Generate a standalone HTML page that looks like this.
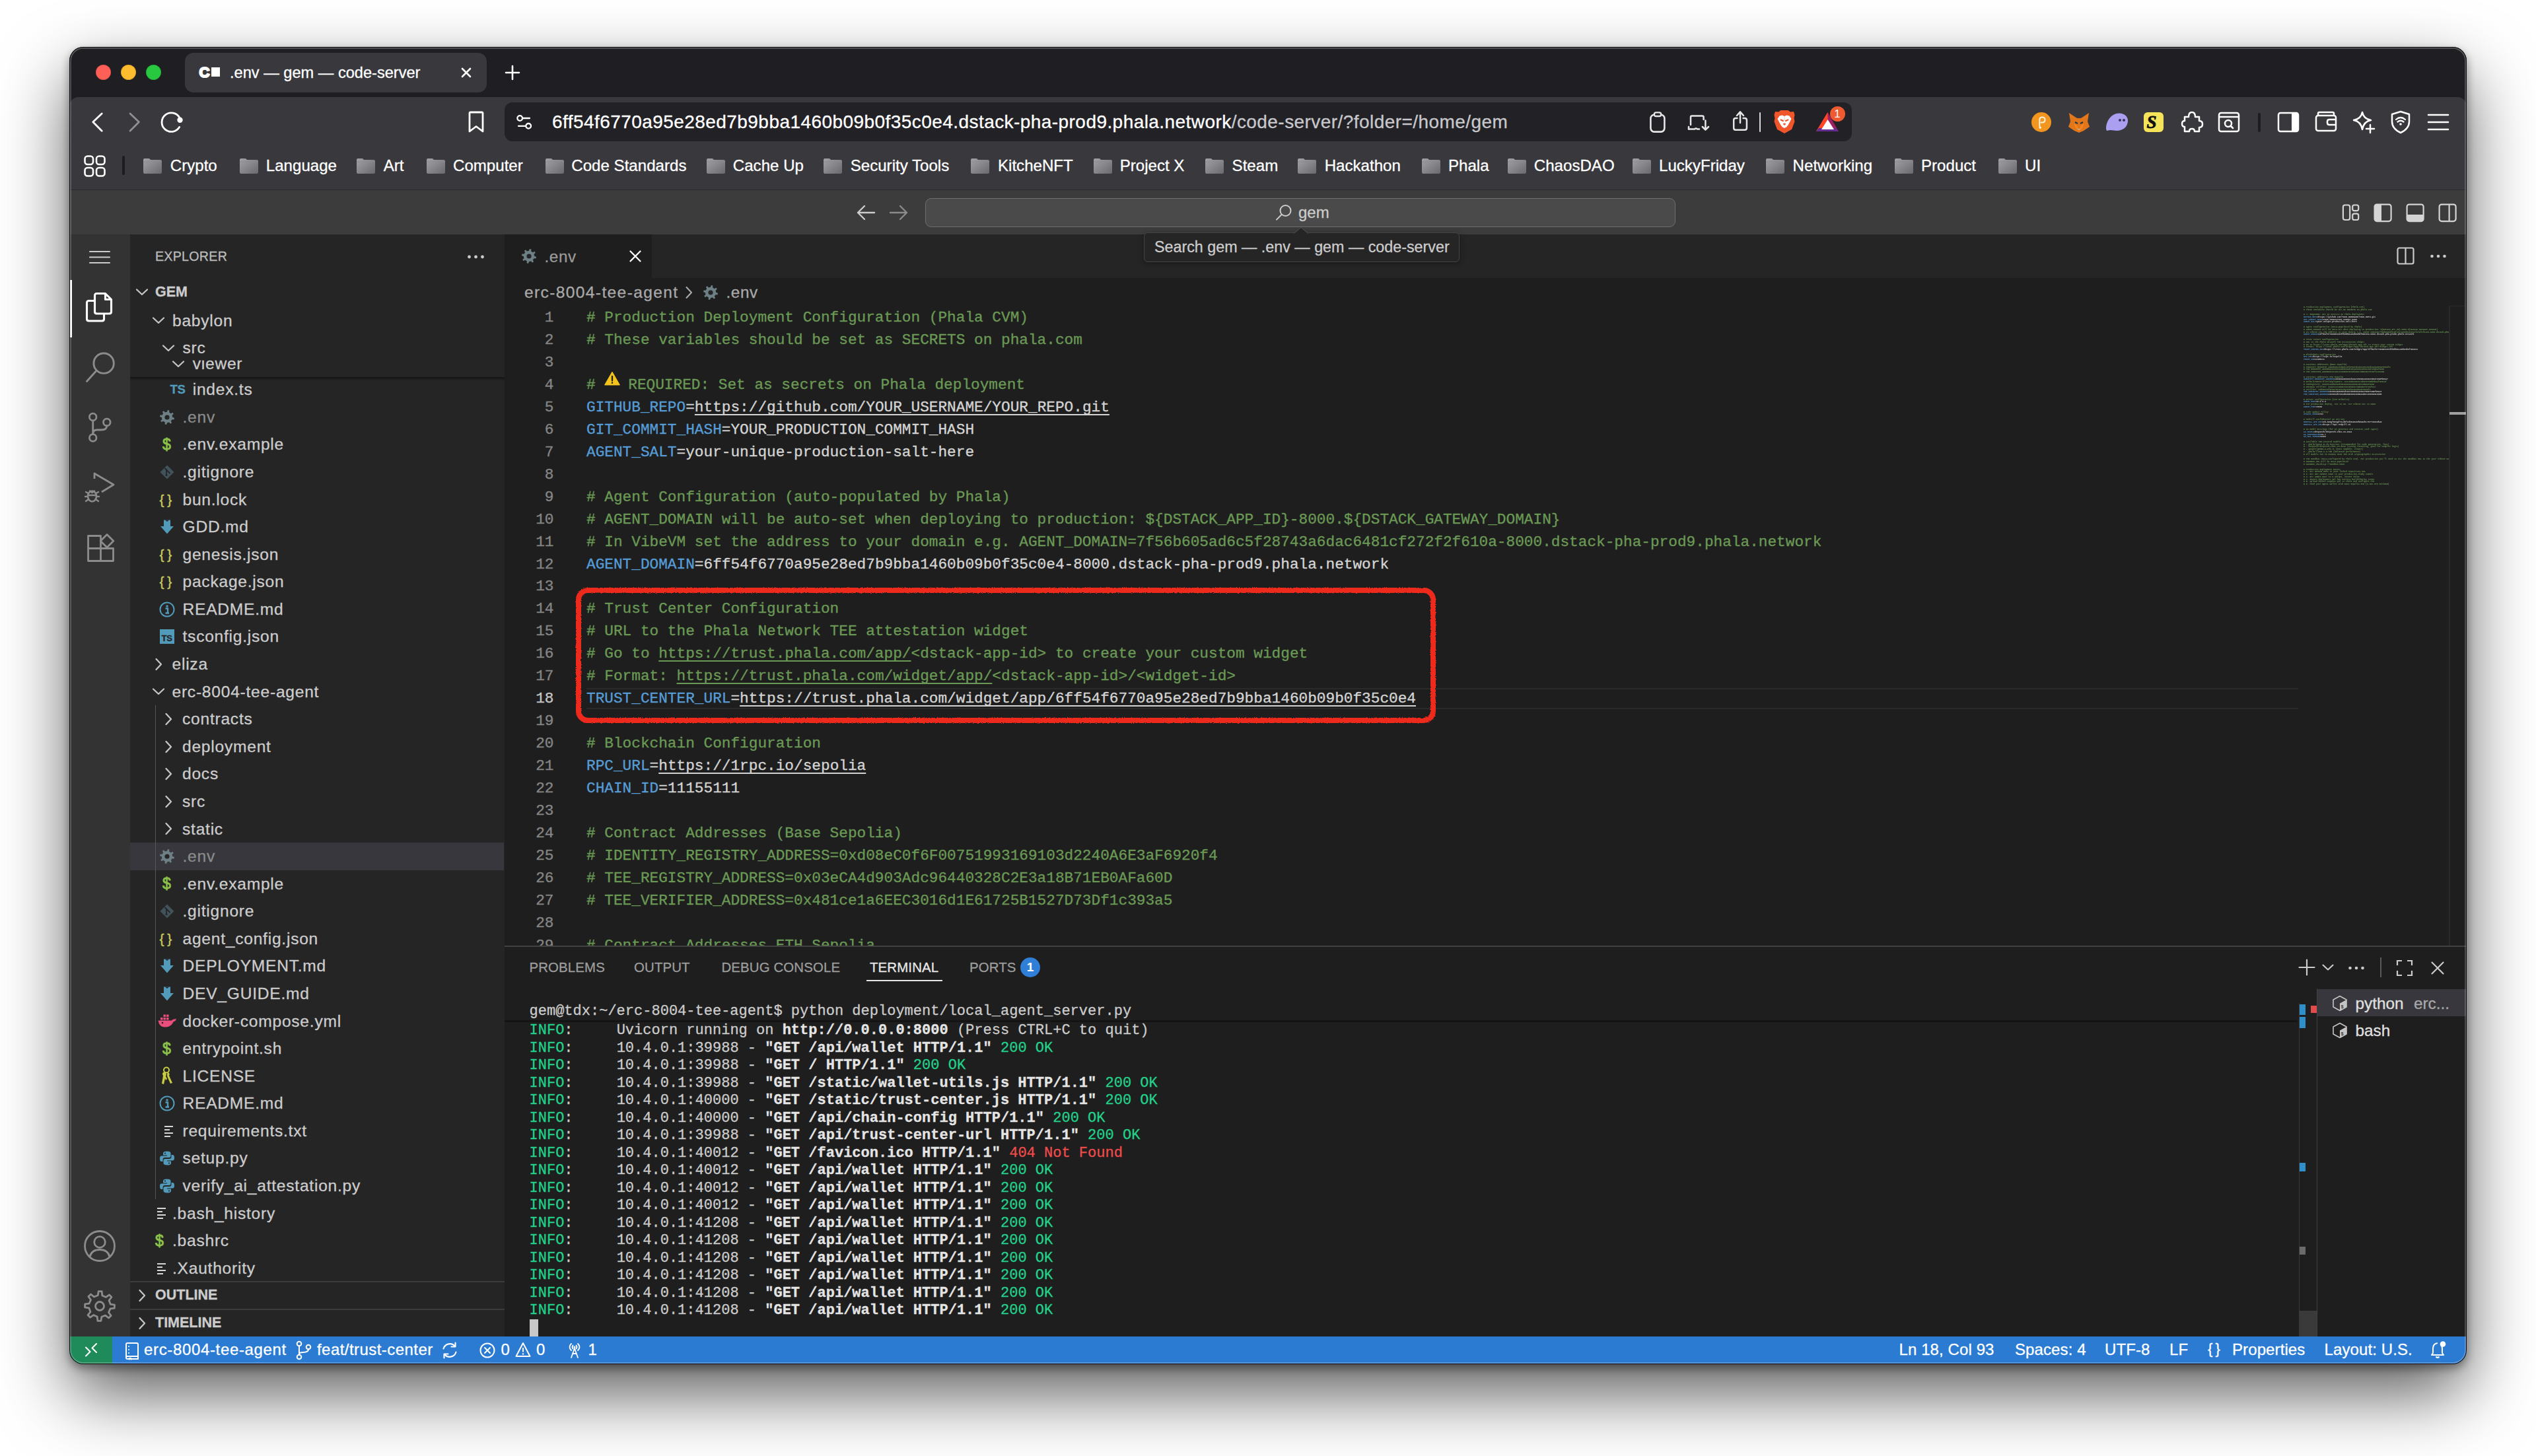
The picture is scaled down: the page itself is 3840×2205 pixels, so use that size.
<!DOCTYPE html>
<html><head><meta charset="utf-8">
<style>
*{box-sizing:border-box;margin:0;padding:0}
html,body{width:3840px;height:2205px;overflow:hidden;background:#ffffff}
body{font-family:"Liberation Sans",sans-serif;position:relative}
.a{position:absolute}
.win{position:absolute;left:105px;top:70.8px;width:3630px;height:1995.5px;border-radius:21px;overflow:hidden;background:#1f1f23;
 box-shadow:0 6px 14px rgba(0,0,0,0.4),0 45px 105px -2px rgba(0,0,0,0.66)}
.wb{position:absolute;left:0;top:0;width:3630px;height:1995.5px;border-radius:21px;box-shadow:inset 0 0 0 1.1px #0b0b0d,inset 0 0 0 2.8px rgba(255,255,255,0.26)}
.t{white-space:pre;position:absolute;-webkit-text-stroke:0.3px currentColor}
.t.m{-webkit-text-stroke:0}
svg{position:absolute;overflow:visible}
.m{font-family:"Liberation Mono",monospace}
</style></head>
<body>
<svg width="0" height="0" style="position:absolute"><filter id="rough"><feTurbulence type="fractalNoise" baseFrequency="1.3" numOctaves="2" seed="5"/><feDisplacementMap in="SourceGraphic" scale="3.2"/></filter></svg>
<div class="win">
<div class="a" style="left:0.00px;top:-0.80px;width:3630.00px;height:77.00px;background:#1f1f23;"></div>
<div class="a" style="left:0.00px;top:76.20px;width:3630.00px;height:141.00px;background:#38383d;border-radius:14px 14px 0 0"></div>
<div class="a" style="left:0.00px;top:216.20px;width:3630.00px;height:1.50px;background:#2b2b2f;"></div>
<div class="a" style="left:40.00px;top:27.70px;width:23px;height:23px;border-radius:50%;background:#fe5f57;box-shadow:inset 0 0 0 0.8px rgba(0,0,0,0.15)"></div>
<div class="a" style="left:77.90px;top:27.70px;width:23px;height:23px;border-radius:50%;background:#febc2e;box-shadow:inset 0 0 0 0.8px rgba(0,0,0,0.15)"></div>
<div class="a" style="left:115.70px;top:27.70px;width:23px;height:23px;border-radius:50%;background:#28c840;box-shadow:inset 0 0 0 0.8px rgba(0,0,0,0.15)"></div>
<div class="a" style="left:175.00px;top:9.20px;width:457.00px;height:60.00px;background:#38383d;border-radius:13px"></div>
<div class="t" style="left:196.50px;top:26.00px;font-size:22px;line-height:26.4px;color:#fff;font-family:'Liberation Sans',sans-serif;font-weight:bold;-webkit-text-stroke:2.2px #fff">C</div>
<div class="a" style="left:214.50px;top:31.70px;width:13.00px;height:14.00px;background:#fff;"></div>
<div class="t" style="left:243.00px;top:25.04px;font-size:23.6px;line-height:28.32px;color:#ffffff;font-family:'Liberation Sans',sans-serif;font-weight:normal;">.env — gem — code-server</div>
<svg style="left:593.00px;top:31.20px;" width="16" height="16" viewBox="0 0 16 16"><path d="M2 2L14 14M14 2L2 14" stroke="#fff" stroke-width="2.6" stroke-linecap="round"/></svg>
<svg style="left:660.00px;top:28.20px;" width="22" height="22" viewBox="0 0 22 22"><path d="M11 1V21M1 11H21" stroke="#fff" stroke-width="2.6" stroke-linecap="round"/></svg>
<svg style="left:33.00px;top:99.20px;" width="20" height="30" viewBox="0 0 20 30"><path d="M16.2 1.9L2.8 14.8L16.2 28.2" fill="none" stroke="#fff" stroke-width="2.8" stroke-linecap="round" stroke-linejoin="round"/></svg>
<svg style="left:89.00px;top:99.20px;" width="20" height="30" viewBox="0 0 20 30"><path d="M3 1.9L16.4 14.8L3 28.2" fill="none" stroke="#8e8e93" stroke-width="2.8" stroke-linecap="round" stroke-linejoin="round"/></svg>
<svg style="left:137.00px;top:95.20px;" width="36" height="36" viewBox="0 0 36 36"><path d="M30 12.5A14.3 14.3 0 1 0 29.6 26.5" fill="none" stroke="#fff" stroke-width="2.8" stroke-linecap="round"/><circle cx="30.5" cy="15.7" r="4.2" fill="#fff"/></svg>
<svg style="left:603.00px;top:97.20px;" width="26" height="34" viewBox="0 0 26 34"><path d="M3 3.5Q3 2 4.5 2H21.5Q23 2 23 3.5V31L13 23.5L3 31Z" fill="none" stroke="#fff" stroke-width="2.8" stroke-linejoin="round"/></svg>
<div class="a" style="left:659.00px;top:84.70px;width:2040.00px;height:59.00px;background:#222226;border-radius:12px"></div>
<svg style="left:675.00px;top:101.20px;" width="26" height="26" viewBox="0 0 26 26"><circle cx="7.2" cy="7" r="3.8" fill="none" stroke="#fff" stroke-width="2.3"/><path d="M11.5 7H22" stroke="#fff" stroke-width="2.3" stroke-linecap="round"/><circle cx="20.2" cy="18.8" r="3.8" fill="none" stroke="#fff" stroke-width="2.3"/><path d="M5 18.8H15.8" stroke="#fff" stroke-width="2.3" stroke-linecap="round"/></svg>
<div class="t" style="left:731.00px;top:97.40px;font-size:28px;line-height:33.6px;color:#ffffff;font-family:'Liberation Sans',sans-serif;font-weight:normal;letter-spacing:0.44px">6ff54f6770a95e28ed7b9bba1460b09b0f35c0e4.dstack-pha-prod9.phala.network<span style="color:#c7c7cc">/code-server/?folder=/home/gem</span></div>
<svg style="left:2391.00px;top:97.20px;" width="28" height="34" viewBox="0 0 28 34"><rect x="3.4" y="5.8" width="21" height="25.8" rx="5.5" fill="none" stroke="#e6e6e6" stroke-width="2.6"/><rect x="8.8" y="2.4" width="10.4" height="5.6" rx="2.8" fill="#222226" stroke="#e6e6e6" stroke-width="2.4"/></svg>
<svg style="left:2449.00px;top:101.20px;" width="36" height="28" viewBox="0 0 36 28"><path d="M6 17V5.5Q6 3.6 7.9 3.6H23.7Q25.6 3.6 25.6 5.5V9" fill="none" stroke="#e6e6e6" stroke-width="2.5" stroke-linecap="round"/><path d="M3 23.5H12Q14 21.5 16 23.5H19" fill="none" stroke="#e6e6e6" stroke-width="2.5" stroke-linecap="round"/><path d="M3 20V23.5" stroke="#e6e6e6" stroke-width="2.5" stroke-linecap="round"/><path d="M28.4 10.5V24.5M23.8 20L28.4 24.6L33 20" fill="none" stroke="#e6e6e6" stroke-width="2.5" stroke-linecap="round" stroke-linejoin="round"/></svg>
<svg style="left:2516.00px;top:95.20px;" width="28" height="34" viewBox="0 0 28 34"><path d="M14 20V4M9 9L14 3.4L19 9" fill="none" stroke="#e6e6e6" stroke-width="2.5" stroke-linecap="round" stroke-linejoin="round"/><path d="M9.5 13H7Q4.2 13 4.2 15.8V27.8Q4.2 30.8 7 30.8H21Q23.9 30.8 23.9 27.8V15.8Q23.9 13 21 13H18.5" fill="none" stroke="#e6e6e6" stroke-width="2.5" stroke-linecap="round"/></svg>
<div class="a" style="left:2559.00px;top:99.20px;width:2.40px;height:30.00px;background:#d8d8d8;border-radius:2px"></div>
<svg style="left:2581.00px;top:95.20px;" width="32" height="37" viewBox="0 0 32 37"><path d="M7 3.5L10.5 1H21.5L25 3.5L30 3L31.5 8L30.5 13L31.5 18L27 30L16 36L5 30L0.5 18L1.5 13L0.5 8L2 3Z" fill="#f1562b"/><path d="M8.5 9.5L12.5 8.5L16 10L19.5 8.5L23.5 9.5L26.5 14L24.5 18L21.5 23.5L19 26.5L16 28L13 26.5L10.5 23.5L7.5 18L5.5 14Z" fill="#ffffff"/><path d="M10.5 15.5L14 17M21.5 15.5L18 17" stroke="#f1562b" stroke-width="2" stroke-linecap="round"/><path d="M13.5 21.5L16 20.5L18.5 21.5L16 24Z" fill="#f1562b"/><path d="M16 10V17" stroke="#f7c6b5" stroke-width="1"/></svg>
<svg style="left:2643.00px;top:97.20px;" width="38" height="33" viewBox="0 0 38 33"><path d="M19.5 2L36 31H2Z" fill="#9e1f63"/><path d="M19.5 2L2 31H9L19.5 12.5Z" fill="#ff4724"/><path d="M2 31H36L32 26H6Z" fill="#662d91"/><path d="M19.5 13L29 28H10Z" fill="#ffffff"/></svg>
<div class="a" style="left:2665.50px;top:90.70px;width:23px;height:23px;border-radius:50%;background:#f05a31;color:#fff;font-size:17px;line-height:23px;text-align:center">1</div>
<svg style="left:2971.00px;top:99.20px;" width="30" height="30" viewBox="0 0 30 30"><circle cx="15" cy="15" r="15" fill="#f3961f"/><path d="M12.3 21V11.5Q12.3 7.5 16.3 7.5Q20.5 7.5 20.5 11.5Q20.5 15.5 16.3 15.5H14.5" fill="none" stroke="#fff3e0" stroke-width="2" stroke-linecap="round"/><circle cx="13.2" cy="23.2" r="1.7" fill="#fff3e0"/></svg>
<svg style="left:3026.00px;top:97.20px;" width="34" height="34" viewBox="0 0 34 34"><path d="M2 3L14 11H20L32 3L30 16L33 24L24 30L17 33L10 30L1 24L4 16Z" fill="#e2761b"/><path d="M9 19L14 22L17 29L20 22L25 19L22 26L17 30L12 26Z" fill="#f6851b"/><path d="M11 17L15 19M23 17L19 19" stroke="#233447" stroke-width="2"/><path d="M14 27L17 29L20 27" fill="#c0ad9e"/></svg>
<svg style="left:3083.00px;top:99.20px;" width="36" height="30" viewBox="0 0 36 30"><path d="M3 28C-1 28 1 10 12 4C23 -2 35 4 34 14C33 22 28 27 18 28C12 28 8 26 3 28Z" fill="#ab9ff2"/><circle cx="22" cy="12" r="2" fill="#3c315b"/><circle cx="28" cy="12" r="2" fill="#3c315b"/></svg>
<div class="a" style="left:3141.00px;top:99.20px;width:30.00px;height:30.00px;background:#f5e45a;border-radius:6px"></div>
<div class="t" style="left:3145.50px;top:98.50px;font-size:27px;line-height:32.4px;color:#111;font-family:'Liberation Serif',serif;font-weight:bold;font-style:italic;-webkit-text-stroke:0.8px #111">S</div>
<svg style="left:3197.00px;top:97.20px;" width="34" height="34" viewBox="0 0 34 34"><path d="M6 9H12Q12 2 17 2Q22 2 22 9H28V15Q33 15 33 20Q33 25 28 25V31H21Q21 27 17 27Q13 27 13 31H6V24Q2 24 2 19.5Q2 15 6 15Z" fill="none" stroke="#fff" stroke-width="2.5" stroke-linejoin="round"/></svg>
<svg style="left:3253.00px;top:98.20px;" width="34" height="32" viewBox="0 0 34 32"><rect x="2" y="2" width="30" height="28" rx="3" fill="none" stroke="#fff" stroke-width="2.5"/><path d="M2 8H32" stroke="#fff" stroke-width="2.5"/><circle cx="16" cy="18" r="5" fill="none" stroke="#fff" stroke-width="2.5"/><path d="M19.5 21.5L23 25" stroke="#fff" stroke-width="2.5" stroke-linecap="round"/></svg>
<div class="a" style="left:3313.50px;top:100.20px;width:4.00px;height:29.00px;background:#1d1d20;border-radius:2px"></div>
<svg style="left:3343.00px;top:98.20px;" width="34" height="32" viewBox="0 0 34 32"><rect x="2" y="2" width="30" height="28" rx="3" fill="none" stroke="#fff" stroke-width="2.5"/><rect x="22" y="2" width="10" height="28" fill="#fff"/></svg>
<svg style="left:3400.00px;top:97.20px;" width="34" height="32" viewBox="0 0 34 32"><path d="M5 7V4Q5 2 7 2H27Q29 2 29 4V7" fill="none" stroke="#fff" stroke-width="2.5"/><rect x="2" y="7" width="30" height="23" rx="3" fill="none" stroke="#fff" stroke-width="2.5"/><path d="M32 13H22Q19 13 19 16V18Q19 21 22 21H32" fill="none" stroke="#fff" stroke-width="2.5"/></svg>
<svg style="left:3456.00px;top:96.20px;" width="36" height="36" viewBox="0 0 36 36"><path d="M16 3Q18 13 29 15Q18 17 16 29Q14 17 3 15Q14 13 16 3Z" fill="none" stroke="#fff" stroke-width="2.5" stroke-linejoin="round"/><path d="M28 22V34M22 28H34" stroke="#fff" stroke-width="2.5" stroke-linecap="round"/></svg>
<svg style="left:3515.00px;top:96.20px;" width="30" height="36" viewBox="0 0 30 36"><path d="M15 2L28 6V17Q28 28 15 34Q2 28 2 17V6Z" fill="none" stroke="#fff" stroke-width="2.5" stroke-linejoin="round"/><path d="M8 14Q15 8 22 14M10.5 17.5Q15 14 19.5 17.5" fill="none" stroke="#fff" stroke-width="2.3" stroke-linecap="round"/><circle cx="15" cy="21" r="1.8" fill="#fff"/></svg>
<svg style="left:3570.00px;top:101.20px;" width="34" height="26" viewBox="0 0 34 26"><path d="M2 2H32M2 13H32M2 24H32" stroke="#fff" stroke-width="2.6" stroke-linecap="round"/></svg>
<svg style="left:22.00px;top:164.20px;" width="34" height="34" viewBox="0 0 34 34"><rect x="1.5" y="1.5" width="12.5" height="12.5" rx="4" fill="none" stroke="#fff" stroke-width="2.6"/><rect x="1.5" y="19" width="12.5" height="12.5" rx="4" fill="none" stroke="#fff" stroke-width="2.6"/><rect x="19" y="1.5" width="12.5" height="12.5" rx="4" fill="none" stroke="#fff" stroke-width="2.6"/><rect x="19" y="19" width="12.5" height="12.5" rx="4" fill="none" stroke="#fff" stroke-width="2.6"/></svg>
<div class="a" style="left:80.00px;top:165.20px;width:4.00px;height:29.00px;background:#1d1d20;border-radius:2px"></div>
<svg style="left:111.00px;top:168.20px;" width="30" height="25" viewBox="0 0 30 25"><defs><linearGradient id="fg" x1="0" y1="0" x2="1" y2="1"><stop offset="0" stop-color="#a2a2a7"/><stop offset="1" stop-color="#69696e"/></linearGradient></defs><path d="M1 3Q1 1 3 1H10L12 3H27Q29 3 29 5V22Q29 24 27 24H3Q1 24 1 22Z" fill="url(#fg)"/><path d="M1 6H29" stroke="#8b8b90" stroke-width="1"/></svg>
<div class="t" style="left:152.80px;top:165.74px;font-size:24.1px;line-height:28.92px;color:#ffffff;font-family:'Liberation Sans',sans-serif;font-weight:normal;">Crypto</div>
<svg style="left:257.00px;top:168.20px;" width="30" height="25" viewBox="0 0 30 25"><defs><linearGradient id="fg" x1="0" y1="0" x2="1" y2="1"><stop offset="0" stop-color="#a2a2a7"/><stop offset="1" stop-color="#69696e"/></linearGradient></defs><path d="M1 3Q1 1 3 1H10L12 3H27Q29 3 29 5V22Q29 24 27 24H3Q1 24 1 22Z" fill="url(#fg)"/><path d="M1 6H29" stroke="#8b8b90" stroke-width="1"/></svg>
<div class="t" style="left:297.80px;top:165.74px;font-size:24.1px;line-height:28.92px;color:#ffffff;font-family:'Liberation Sans',sans-serif;font-weight:normal;">Language</div>
<svg style="left:434.00px;top:168.20px;" width="30" height="25" viewBox="0 0 30 25"><defs><linearGradient id="fg" x1="0" y1="0" x2="1" y2="1"><stop offset="0" stop-color="#a2a2a7"/><stop offset="1" stop-color="#69696e"/></linearGradient></defs><path d="M1 3Q1 1 3 1H10L12 3H27Q29 3 29 5V22Q29 24 27 24H3Q1 24 1 22Z" fill="url(#fg)"/><path d="M1 6H29" stroke="#8b8b90" stroke-width="1"/></svg>
<div class="t" style="left:475.70px;top:165.74px;font-size:24.1px;line-height:28.92px;color:#ffffff;font-family:'Liberation Sans',sans-serif;font-weight:normal;">Art</div>
<svg style="left:540.00px;top:168.20px;" width="30" height="25" viewBox="0 0 30 25"><defs><linearGradient id="fg" x1="0" y1="0" x2="1" y2="1"><stop offset="0" stop-color="#a2a2a7"/><stop offset="1" stop-color="#69696e"/></linearGradient></defs><path d="M1 3Q1 1 3 1H10L12 3H27Q29 3 29 5V22Q29 24 27 24H3Q1 24 1 22Z" fill="url(#fg)"/><path d="M1 6H29" stroke="#8b8b90" stroke-width="1"/></svg>
<div class="t" style="left:581.00px;top:165.74px;font-size:24.1px;line-height:28.92px;color:#ffffff;font-family:'Liberation Sans',sans-serif;font-weight:normal;">Computer</div>
<svg style="left:720.00px;top:168.20px;" width="30" height="25" viewBox="0 0 30 25"><defs><linearGradient id="fg" x1="0" y1="0" x2="1" y2="1"><stop offset="0" stop-color="#a2a2a7"/><stop offset="1" stop-color="#69696e"/></linearGradient></defs><path d="M1 3Q1 1 3 1H10L12 3H27Q29 3 29 5V22Q29 24 27 24H3Q1 24 1 22Z" fill="url(#fg)"/><path d="M1 6H29" stroke="#8b8b90" stroke-width="1"/></svg>
<div class="t" style="left:760.30px;top:165.74px;font-size:24.1px;line-height:28.92px;color:#ffffff;font-family:'Liberation Sans',sans-serif;font-weight:normal;">Code Standards</div>
<svg style="left:963.90px;top:168.20px;" width="30" height="25" viewBox="0 0 30 25"><defs><linearGradient id="fg" x1="0" y1="0" x2="1" y2="1"><stop offset="0" stop-color="#a2a2a7"/><stop offset="1" stop-color="#69696e"/></linearGradient></defs><path d="M1 3Q1 1 3 1H10L12 3H27Q29 3 29 5V22Q29 24 27 24H3Q1 24 1 22Z" fill="url(#fg)"/><path d="M1 6H29" stroke="#8b8b90" stroke-width="1"/></svg>
<div class="t" style="left:1004.80px;top:165.74px;font-size:24.1px;line-height:28.92px;color:#ffffff;font-family:'Liberation Sans',sans-serif;font-weight:normal;">Cache Up</div>
<svg style="left:1141.00px;top:168.20px;" width="30" height="25" viewBox="0 0 30 25"><defs><linearGradient id="fg" x1="0" y1="0" x2="1" y2="1"><stop offset="0" stop-color="#a2a2a7"/><stop offset="1" stop-color="#69696e"/></linearGradient></defs><path d="M1 3Q1 1 3 1H10L12 3H27Q29 3 29 5V22Q29 24 27 24H3Q1 24 1 22Z" fill="url(#fg)"/><path d="M1 6H29" stroke="#8b8b90" stroke-width="1"/></svg>
<div class="t" style="left:1182.70px;top:165.74px;font-size:24.1px;line-height:28.92px;color:#ffffff;font-family:'Liberation Sans',sans-serif;font-weight:normal;">Security Tools</div>
<svg style="left:1364.00px;top:168.20px;" width="30" height="25" viewBox="0 0 30 25"><defs><linearGradient id="fg" x1="0" y1="0" x2="1" y2="1"><stop offset="0" stop-color="#a2a2a7"/><stop offset="1" stop-color="#69696e"/></linearGradient></defs><path d="M1 3Q1 1 3 1H10L12 3H27Q29 3 29 5V22Q29 24 27 24H3Q1 24 1 22Z" fill="url(#fg)"/><path d="M1 6H29" stroke="#8b8b90" stroke-width="1"/></svg>
<div class="t" style="left:1406.00px;top:165.74px;font-size:24.1px;line-height:28.92px;color:#ffffff;font-family:'Liberation Sans',sans-serif;font-weight:normal;">KitcheNFT</div>
<svg style="left:1549.80px;top:168.20px;" width="30" height="25" viewBox="0 0 30 25"><defs><linearGradient id="fg" x1="0" y1="0" x2="1" y2="1"><stop offset="0" stop-color="#a2a2a7"/><stop offset="1" stop-color="#69696e"/></linearGradient></defs><path d="M1 3Q1 1 3 1H10L12 3H27Q29 3 29 5V22Q29 24 27 24H3Q1 24 1 22Z" fill="url(#fg)"/><path d="M1 6H29" stroke="#8b8b90" stroke-width="1"/></svg>
<div class="t" style="left:1590.70px;top:165.74px;font-size:24.1px;line-height:28.92px;color:#ffffff;font-family:'Liberation Sans',sans-serif;font-weight:normal;">Project X</div>
<svg style="left:1719.40px;top:168.20px;" width="30" height="25" viewBox="0 0 30 25"><defs><linearGradient id="fg" x1="0" y1="0" x2="1" y2="1"><stop offset="0" stop-color="#a2a2a7"/><stop offset="1" stop-color="#69696e"/></linearGradient></defs><path d="M1 3Q1 1 3 1H10L12 3H27Q29 3 29 5V22Q29 24 27 24H3Q1 24 1 22Z" fill="url(#fg)"/><path d="M1 6H29" stroke="#8b8b90" stroke-width="1"/></svg>
<div class="t" style="left:1760.60px;top:165.74px;font-size:24.1px;line-height:28.92px;color:#ffffff;font-family:'Liberation Sans',sans-serif;font-weight:normal;">Steam</div>
<svg style="left:1859.00px;top:168.20px;" width="30" height="25" viewBox="0 0 30 25"><defs><linearGradient id="fg" x1="0" y1="0" x2="1" y2="1"><stop offset="0" stop-color="#a2a2a7"/><stop offset="1" stop-color="#69696e"/></linearGradient></defs><path d="M1 3Q1 1 3 1H10L12 3H27Q29 3 29 5V22Q29 24 27 24H3Q1 24 1 22Z" fill="url(#fg)"/><path d="M1 6H29" stroke="#8b8b90" stroke-width="1"/></svg>
<div class="t" style="left:1900.70px;top:165.74px;font-size:24.1px;line-height:28.92px;color:#ffffff;font-family:'Liberation Sans',sans-serif;font-weight:normal;">Hackathon</div>
<svg style="left:2046.80px;top:168.20px;" width="30" height="25" viewBox="0 0 30 25"><defs><linearGradient id="fg" x1="0" y1="0" x2="1" y2="1"><stop offset="0" stop-color="#a2a2a7"/><stop offset="1" stop-color="#69696e"/></linearGradient></defs><path d="M1 3Q1 1 3 1H10L12 3H27Q29 3 29 5V22Q29 24 27 24H3Q1 24 1 22Z" fill="url(#fg)"/><path d="M1 6H29" stroke="#8b8b90" stroke-width="1"/></svg>
<div class="t" style="left:2088.00px;top:165.74px;font-size:24.1px;line-height:28.92px;color:#ffffff;font-family:'Liberation Sans',sans-serif;font-weight:normal;">Phala</div>
<svg style="left:2177.00px;top:168.20px;" width="30" height="25" viewBox="0 0 30 25"><defs><linearGradient id="fg" x1="0" y1="0" x2="1" y2="1"><stop offset="0" stop-color="#a2a2a7"/><stop offset="1" stop-color="#69696e"/></linearGradient></defs><path d="M1 3Q1 1 3 1H10L12 3H27Q29 3 29 5V22Q29 24 27 24H3Q1 24 1 22Z" fill="url(#fg)"/><path d="M1 6H29" stroke="#8b8b90" stroke-width="1"/></svg>
<div class="t" style="left:2217.80px;top:165.74px;font-size:24.1px;line-height:28.92px;color:#ffffff;font-family:'Liberation Sans',sans-serif;font-weight:normal;">ChaosDAO</div>
<svg style="left:2366.00px;top:168.20px;" width="30" height="25" viewBox="0 0 30 25"><defs><linearGradient id="fg" x1="0" y1="0" x2="1" y2="1"><stop offset="0" stop-color="#a2a2a7"/><stop offset="1" stop-color="#69696e"/></linearGradient></defs><path d="M1 3Q1 1 3 1H10L12 3H27Q29 3 29 5V22Q29 24 27 24H3Q1 24 1 22Z" fill="url(#fg)"/><path d="M1 6H29" stroke="#8b8b90" stroke-width="1"/></svg>
<div class="t" style="left:2407.00px;top:165.74px;font-size:24.1px;line-height:28.92px;color:#ffffff;font-family:'Liberation Sans',sans-serif;font-weight:normal;">LuckyFriday</div>
<svg style="left:2568.00px;top:168.20px;" width="30" height="25" viewBox="0 0 30 25"><defs><linearGradient id="fg" x1="0" y1="0" x2="1" y2="1"><stop offset="0" stop-color="#a2a2a7"/><stop offset="1" stop-color="#69696e"/></linearGradient></defs><path d="M1 3Q1 1 3 1H10L12 3H27Q29 3 29 5V22Q29 24 27 24H3Q1 24 1 22Z" fill="url(#fg)"/><path d="M1 6H29" stroke="#8b8b90" stroke-width="1"/></svg>
<div class="t" style="left:2609.60px;top:165.74px;font-size:24.1px;line-height:28.92px;color:#ffffff;font-family:'Liberation Sans',sans-serif;font-weight:normal;">Networking</div>
<svg style="left:2763.00px;top:168.20px;" width="30" height="25" viewBox="0 0 30 25"><defs><linearGradient id="fg" x1="0" y1="0" x2="1" y2="1"><stop offset="0" stop-color="#a2a2a7"/><stop offset="1" stop-color="#69696e"/></linearGradient></defs><path d="M1 3Q1 1 3 1H10L12 3H27Q29 3 29 5V22Q29 24 27 24H3Q1 24 1 22Z" fill="url(#fg)"/><path d="M1 6H29" stroke="#8b8b90" stroke-width="1"/></svg>
<div class="t" style="left:2804.00px;top:165.74px;font-size:24.1px;line-height:28.92px;color:#ffffff;font-family:'Liberation Sans',sans-serif;font-weight:normal;">Product</div>
<svg style="left:2919.50px;top:168.20px;" width="30" height="25" viewBox="0 0 30 25"><defs><linearGradient id="fg" x1="0" y1="0" x2="1" y2="1"><stop offset="0" stop-color="#a2a2a7"/><stop offset="1" stop-color="#69696e"/></linearGradient></defs><path d="M1 3Q1 1 3 1H10L12 3H27Q29 3 29 5V22Q29 24 27 24H3Q1 24 1 22Z" fill="url(#fg)"/><path d="M1 6H29" stroke="#8b8b90" stroke-width="1"/></svg>
<div class="t" style="left:2961.00px;top:165.74px;font-size:24.1px;line-height:28.92px;color:#ffffff;font-family:'Liberation Sans',sans-serif;font-weight:normal;">UI</div>
<div class="a" style="left:0.00px;top:217.20px;width:3630.00px;height:67.00px;background:#3c3c3c;"></div>
<svg style="left:1191.00px;top:239.20px;" width="30" height="24" viewBox="0 0 30 24"><path d="M28 12H3M13 2L3 12L13 22" fill="none" stroke="#cccccc" stroke-width="2.4" stroke-linecap="round" stroke-linejoin="round"/></svg>
<svg style="left:1241.00px;top:239.20px;" width="30" height="24" viewBox="0 0 30 24"><path d="M2 12H27M17 2L27 12L17 22" fill="none" stroke="#8b8b8b" stroke-width="2.4" stroke-linecap="round" stroke-linejoin="round"/></svg>
<div class="a" style="left:1296.00px;top:229.20px;width:1136.00px;height:44.00px;background:#4a4a4a;border:1.6px solid #6e6e6e;border-radius:9px"></div>
<svg style="left:1826.00px;top:238.20px;" width="26" height="26" viewBox="0 0 26 26"><circle cx="15.5" cy="10" r="8" fill="none" stroke="#cccccc" stroke-width="2"/><path d="M9.8 15.8L2 23.6" stroke="#cccccc" stroke-width="2" stroke-linecap="round"/></svg>
<div class="t" style="left:1861.00px;top:236.80px;font-size:24px;line-height:28.8px;color:#cccccc;font-family:'Liberation Sans',sans-serif;font-weight:normal;">gem</div>
<svg style="left:3440.00px;top:237.20px;" width="30" height="28" viewBox="0 0 30 28"><rect x="2.9" y="2.5" width="10.3" height="22.5" rx="3" fill="none" stroke="#d4d4d4" stroke-width="2.2"/><rect x="17.2" y="2.5" width="9" height="8.6" rx="2.6" fill="none" stroke="#d4d4d4" stroke-width="2.2"/><rect x="17.2" y="15.6" width="9" height="9.4" rx="2.6" fill="none" stroke="#d4d4d4" stroke-width="2.2"/></svg>
<svg style="left:3488.00px;top:236.20px;" width="30" height="30" viewBox="0 0 30 30"><rect x="2.6" y="2.6" width="25" height="25.5" rx="3.5" fill="none" stroke="#d4d4d4" stroke-width="2.2"/><path d="M2.6 6Q2.6 2.6 6 2.6H13V28.1H6Q2.6 28.1 2.6 24.7Z" fill="#d4d4d4"/></svg>
<svg style="left:3537.00px;top:236.20px;" width="30" height="30" viewBox="0 0 30 30"><rect x="2.6" y="2.6" width="25" height="25.5" rx="3.5" fill="none" stroke="#d4d4d4" stroke-width="2.2"/><path d="M2.6 18H27.6V24.7Q27.6 28.1 24.2 28.1H6Q2.6 28.1 2.6 24.7Z" fill="#d4d4d4"/></svg>
<svg style="left:3586.00px;top:236.20px;" width="30" height="30" viewBox="0 0 30 30"><rect x="2.6" y="2.6" width="25" height="25.5" rx="3.5" fill="none" stroke="#d4d4d4" stroke-width="2.2"/><path d="M17.6 2.6V28.1" stroke="#d4d4d4" stroke-width="2.2"/></svg>
<div class="a" style="left:0.00px;top:284.20px;width:92.00px;height:1669.00px;background:#333333;"></div>
<svg style="left:29.00px;top:307.20px;" width="34" height="24" viewBox="0 0 34 24"><path d="M2 3H32M2 11.5H32M2 20H32" stroke="#cccccc" stroke-width="2.1" stroke-linecap="round"/></svg>
<div class="a" style="left:0.00px;top:353.70px;width:4.00px;height:87.00px;background:#ffffff;"></div>
<svg style="left:25.00px;top:372.70px;" width="44" height="46" viewBox="0 0 44 46"><path d="M13 12.5H4.5Q1.5 12.5 1.5 15.5V40Q1.5 43 4.5 43H24.5Q27.5 43 27.5 40V32" fill="none" stroke="#fff" stroke-width="3.1" stroke-linejoin="round"/><path d="M13.5 4.5Q13.5 1.5 16.5 1.5H29.5L38.5 10.5V29Q38.5 32 35.5 32H16.5Q13.5 32 13.5 29Z" fill="none" stroke="#fff" stroke-width="3.1" stroke-linejoin="round"/><path d="M29.5 1.5V10.5H38.5" fill="none" stroke="#fff" stroke-width="3.1" stroke-linejoin="round"/></svg>
<svg style="left:21.00px;top:459.20px;" width="50" height="52" viewBox="0 0 50 52"><circle cx="31.1" cy="20.2" r="15.2" fill="none" stroke="#8c8c8c" stroke-width="2.9"/><path d="M20.3 31L5.5 47.5" stroke="#8c8c8c" stroke-width="2.9" stroke-linecap="round"/></svg>
<svg style="left:21.00px;top:549.20px;" width="50" height="56" viewBox="0 0 50 56"><circle cx="14.7" cy="11.5" r="5.3" fill="none" stroke="#8c8c8c" stroke-width="2.8"/><circle cx="14.7" cy="43" r="5.3" fill="none" stroke="#8c8c8c" stroke-width="2.8"/><circle cx="35.8" cy="19.4" r="5.3" fill="none" stroke="#8c8c8c" stroke-width="2.8"/><path d="M14.7 16.8V37.7M35.8 24.7Q35.8 31 27 31H21Q14.7 31 14.7 37" fill="none" stroke="#8c8c8c" stroke-width="2.8"/></svg>
<svg style="left:19.00px;top:641.20px;" width="54" height="54" viewBox="0 0 54 54"><path d="M19 13V5L48 22L30 33" fill="none" stroke="#8c8c8c" stroke-width="2.8" stroke-linejoin="round"/><ellipse cx="15.5" cy="39.5" rx="6.5" ry="8" fill="none" stroke="#8c8c8c" stroke-width="2.6"/><path d="M9 38H22M6 33L9.5 35M25 33L21.5 35M5 40H9M22 40H26M6 47L9.5 44.5M25 47L21.5 44.5M12 31.5L15.5 34L19 31.5" fill="none" stroke="#8c8c8c" stroke-width="2.4" stroke-linecap="round"/></svg>
<svg style="left:23.00px;top:735.20px;" width="48" height="48" viewBox="0 0 48 48"><path d="M5.5 24.5H24.5V43.5H5.5ZM24.5 24.5H43.5V43.5H24.5ZM5.5 5.5H24.5V24.5H5.5Z" fill="none" stroke="#8c8c8c" stroke-width="2.8" stroke-linejoin="round"/><path d="M34 3.5L43.8 13.3L34 23.1L24.2 13.3Z" fill="none" stroke="#8c8c8c" stroke-width="2.8" stroke-linejoin="round"/></svg>
<svg style="left:21.00px;top:1791.20px;" width="50" height="50" viewBox="0 0 50 50"><circle cx="25" cy="25" r="22.5" fill="none" stroke="#8c8c8c" stroke-width="2.8"/><circle cx="25" cy="19" r="8.3" fill="none" stroke="#8c8c8c" stroke-width="2.8"/><path d="M10 41Q13 30.5 25 30.5Q37 30.5 40 41" fill="none" stroke="#8c8c8c" stroke-width="2.8"/></svg>
<svg style="left:21.00px;top:1882.20px;" width="50" height="50" viewBox="0 0 50 50"><path d="M25.00 8.50L27.12 2.60L31.95 3.60L31.55 9.86L36.67 13.33L42.34 10.66L45.05 14.79L40.34 18.93L41.50 25.00L47.40 27.12L46.40 31.95L40.14 31.55L36.67 36.67L39.34 42.34L35.21 45.05L31.07 40.34L25.00 41.50L22.88 47.40L18.05 46.40L18.45 40.14L13.33 36.67L7.66 39.34L4.95 35.21L9.66 31.07L8.50 25.00L2.60 22.88L3.60 18.05L9.86 18.45L13.33 13.33L10.66 7.66L14.79 4.95L18.93 9.66Z" fill="none" stroke="#8c8c8c" stroke-width="2.8" stroke-linejoin="round" transform="rotate(-10 25 25)"/><circle cx="25" cy="25" r="6.5" fill="none" stroke="#8c8c8c" stroke-width="2.8"/></svg>
<div class="a" style="left:92.00px;top:284.20px;width:567.00px;height:1669.00px;background:#252526;"></div>
<div class="t" style="left:130.00px;top:306.44px;font-size:19.6px;line-height:23.52px;color:#bbbbbb;font-family:'Liberation Sans',sans-serif;font-weight:normal;letter-spacing:0.3px">EXPLORER</div>
<svg style="left:602.00px;top:314.20px;" width="27" height="8" viewBox="0 0 27 8"><circle cx="3.5" cy="4" r="2.4" fill="#cccccc"/><circle cx="13.5" cy="4" r="2.4" fill="#cccccc"/><circle cx="23.5" cy="4" r="2.4" fill="#cccccc"/></svg>
<svg style="left:100.00px;top:365.70px;" width="20" height="12" viewBox="0 0 20 12"><path d="M2 2.5L10 10L18 2.5" fill="none" stroke="#c5c5c5" stroke-width="2.3" stroke-linecap="round" stroke-linejoin="round"/></svg>
<div class="t" style="left:130.00px;top:358.80px;font-size:21.5px;line-height:25.8px;color:#cccccc;font-family:'Liberation Sans',sans-serif;font-weight:bold;">GEM</div>
<div class="a" style="left:92.00px;top:1205.26px;width:566.00px;height:41.60px;background:#37373d;"></div>
<div class="a" style="left:129.50px;top:997.20px;width:1.60px;height:748.00px;background:#585858;"></div>
<div class="t" style="left:152.50px;top:508.10px;font-size:18.5px;line-height:22.2px;color:#519aba;font-family:'Liberation Sans',sans-serif;font-weight:bold;letter-spacing:-0.3px">TS</div>
<div class="t" style="left:186.70px;top:504.44px;font-size:24.6px;line-height:29.52px;color:#cccccc;font-family:'Liberation Sans',sans-serif;font-weight:normal;letter-spacing:0.75px">index.ts</div>
<svg style="left:135.50px;top:548.78px;" width="24" height="24" viewBox="0 0 24 24"><path d="M20.20 12.00L22.97 12.86L22.46 15.40L19.58 15.14L17.80 17.80L19.14 20.36L16.99 21.80L15.14 19.58L12.00 20.20L11.14 22.97L8.60 22.46L8.86 19.58L6.20 17.80L3.64 19.14L2.20 16.99L4.42 15.14L3.80 12.00L1.03 11.14L1.54 8.60L4.42 8.86L6.20 6.20L4.86 3.64L7.01 2.20L8.86 4.42L12.00 3.80L12.86 1.03L15.40 1.54L15.14 4.42L17.80 6.20L20.36 4.86L21.80 7.01L19.58 8.86Z" fill="#6d8086" fill-rule="evenodd"/><circle cx="12" cy="12" r="3.6" fill="#252526"/></svg>
<div class="t" style="left:171.50px;top:546.02px;font-size:24.6px;line-height:29.52px;color:#8b8b8b;font-family:'Liberation Sans',sans-serif;font-weight:normal;letter-spacing:0.75px">.env</div>
<div class="t" style="left:141.00px;top:589.06px;font-size:23px;line-height:27.6px;color:#8dc149;font-family:'Liberation Sans',sans-serif;font-weight:normal;-webkit-text-stroke:0.9px #8dc149">$</div>
<div class="t" style="left:171.50px;top:587.60px;font-size:24.6px;line-height:29.52px;color:#cccccc;font-family:'Liberation Sans',sans-serif;font-weight:normal;letter-spacing:0.75px">.env.example</div>
<svg style="left:135.50px;top:631.94px;" width="24" height="24" viewBox="0 0 24 24"><path d="M12 1.5L22.5 12L12 22.5L1.5 12Z" fill="#41535b"/><path d="M9 6.5L16 13.5M11 9V16" stroke="#252526" stroke-width="1.8" stroke-linecap="round"/><circle cx="11" cy="16.5" r="1.6" fill="#252526"/></svg>
<div class="t" style="left:171.50px;top:629.18px;font-size:24.6px;line-height:29.52px;color:#cccccc;font-family:'Liberation Sans',sans-serif;font-weight:normal;letter-spacing:0.75px">.gitignore</div>
<div class="t" style="left:136.50px;top:672.92px;font-size:21px;line-height:25.2px;color:#cbcb5e;font-family:'Liberation Sans',sans-serif;font-weight:normal;letter-spacing:-0.6px;-webkit-text-stroke:0.4px #cbcb5e">{ }</div>
<div class="t" style="left:171.50px;top:670.76px;font-size:24.6px;line-height:29.52px;color:#cccccc;font-family:'Liberation Sans',sans-serif;font-weight:normal;letter-spacing:0.75px">bun.lock</div>
<svg style="left:136.50px;top:715.10px;" width="22" height="24" viewBox="0 0 22 24"><path d="M6 1.5H16V11H21L11 22.5L1 11H6Z" fill="#519aba"/><path d="M8 1.5L11 4L14 1.5" fill="#252526"/></svg>
<div class="t" style="left:171.50px;top:712.34px;font-size:24.6px;line-height:29.52px;color:#cccccc;font-family:'Liberation Sans',sans-serif;font-weight:normal;letter-spacing:0.75px">GDD.md</div>
<div class="t" style="left:136.50px;top:756.08px;font-size:21px;line-height:25.2px;color:#cbcb5e;font-family:'Liberation Sans',sans-serif;font-weight:normal;letter-spacing:-0.6px;-webkit-text-stroke:0.4px #cbcb5e">{ }</div>
<div class="t" style="left:171.50px;top:753.92px;font-size:24.6px;line-height:29.52px;color:#cccccc;font-family:'Liberation Sans',sans-serif;font-weight:normal;letter-spacing:0.75px">genesis.json</div>
<div class="t" style="left:136.50px;top:797.66px;font-size:21px;line-height:25.2px;color:#cbcb5e;font-family:'Liberation Sans',sans-serif;font-weight:normal;letter-spacing:-0.6px;-webkit-text-stroke:0.4px #cbcb5e">{ }</div>
<div class="t" style="left:171.50px;top:795.50px;font-size:24.6px;line-height:29.52px;color:#cccccc;font-family:'Liberation Sans',sans-serif;font-weight:normal;letter-spacing:0.75px">package.json</div>
<svg style="left:135.50px;top:839.84px;" width="24" height="24" viewBox="0 0 24 24"><circle cx="12" cy="12" r="10.5" fill="none" stroke="#519aba" stroke-width="2"/><circle cx="12" cy="7" r="1.8" fill="#519aba"/><path d="M9.5 10.5H13V17.5M9.5 17.5H15" fill="none" stroke="#519aba" stroke-width="2.4"/></svg>
<div class="t" style="left:171.50px;top:837.08px;font-size:24.6px;line-height:29.52px;color:#cccccc;font-family:'Liberation Sans',sans-serif;font-weight:normal;letter-spacing:0.75px">README.md</div>
<div class="a" style="left:136.50px;top:882.42px;width:22.00px;height:22.00px;background:#519aba;"></div>
<div class="t" style="left:139.50px;top:888.62px;font-size:13px;line-height:15.6px;color:#252526;font-family:'Liberation Sans',sans-serif;font-weight:bold;letter-spacing:-0.3px">TS</div>
<div class="t" style="left:171.50px;top:878.66px;font-size:24.6px;line-height:29.52px;color:#cccccc;font-family:'Liberation Sans',sans-serif;font-weight:normal;letter-spacing:0.75px">tsconfig.json</div>
<svg style="left:129.00px;top:925.00px;" width="12" height="20" viewBox="0 0 12 20"><path d="M2.5 2L10 10L2.5 18" fill="none" stroke="#c5c5c5" stroke-width="2.3" stroke-linecap="round" stroke-linejoin="round"/></svg>
<div class="t" style="left:155.50px;top:920.24px;font-size:24.6px;line-height:29.52px;color:#cccccc;font-family:'Liberation Sans',sans-serif;font-weight:normal;letter-spacing:0.75px">eliza</div>
<svg style="left:125.00px;top:970.58px;" width="20" height="12" viewBox="0 0 20 12"><path d="M2 2.5L10 10L18 2.5" fill="none" stroke="#c5c5c5" stroke-width="2.3" stroke-linecap="round" stroke-linejoin="round"/></svg>
<div class="t" style="left:155.50px;top:961.82px;font-size:24.6px;line-height:29.52px;color:#cccccc;font-family:'Liberation Sans',sans-serif;font-weight:normal;letter-spacing:0.75px">erc-8004-tee-agent</div>
<svg style="left:144.00px;top:1008.16px;" width="12" height="20" viewBox="0 0 12 20"><path d="M2.5 2L10 10L2.5 18" fill="none" stroke="#c5c5c5" stroke-width="2.3" stroke-linecap="round" stroke-linejoin="round"/></svg>
<div class="t" style="left:171.00px;top:1003.40px;font-size:24.6px;line-height:29.52px;color:#cccccc;font-family:'Liberation Sans',sans-serif;font-weight:normal;letter-spacing:0.75px">contracts</div>
<svg style="left:144.00px;top:1049.74px;" width="12" height="20" viewBox="0 0 12 20"><path d="M2.5 2L10 10L2.5 18" fill="none" stroke="#c5c5c5" stroke-width="2.3" stroke-linecap="round" stroke-linejoin="round"/></svg>
<div class="t" style="left:171.00px;top:1044.98px;font-size:24.6px;line-height:29.52px;color:#cccccc;font-family:'Liberation Sans',sans-serif;font-weight:normal;letter-spacing:0.75px">deployment</div>
<svg style="left:144.00px;top:1091.32px;" width="12" height="20" viewBox="0 0 12 20"><path d="M2.5 2L10 10L2.5 18" fill="none" stroke="#c5c5c5" stroke-width="2.3" stroke-linecap="round" stroke-linejoin="round"/></svg>
<div class="t" style="left:171.00px;top:1086.56px;font-size:24.6px;line-height:29.52px;color:#cccccc;font-family:'Liberation Sans',sans-serif;font-weight:normal;letter-spacing:0.75px">docs</div>
<svg style="left:144.00px;top:1132.90px;" width="12" height="20" viewBox="0 0 12 20"><path d="M2.5 2L10 10L2.5 18" fill="none" stroke="#c5c5c5" stroke-width="2.3" stroke-linecap="round" stroke-linejoin="round"/></svg>
<div class="t" style="left:171.00px;top:1128.14px;font-size:24.6px;line-height:29.52px;color:#cccccc;font-family:'Liberation Sans',sans-serif;font-weight:normal;letter-spacing:0.75px">src</div>
<svg style="left:144.00px;top:1174.48px;" width="12" height="20" viewBox="0 0 12 20"><path d="M2.5 2L10 10L2.5 18" fill="none" stroke="#c5c5c5" stroke-width="2.3" stroke-linecap="round" stroke-linejoin="round"/></svg>
<div class="t" style="left:171.00px;top:1169.72px;font-size:24.6px;line-height:29.52px;color:#cccccc;font-family:'Liberation Sans',sans-serif;font-weight:normal;letter-spacing:0.75px">static</div>
<svg style="left:135.50px;top:1214.06px;" width="24" height="24" viewBox="0 0 24 24"><path d="M20.20 12.00L22.97 12.86L22.46 15.40L19.58 15.14L17.80 17.80L19.14 20.36L16.99 21.80L15.14 19.58L12.00 20.20L11.14 22.97L8.60 22.46L8.86 19.58L6.20 17.80L3.64 19.14L2.20 16.99L4.42 15.14L3.80 12.00L1.03 11.14L1.54 8.60L4.42 8.86L6.20 6.20L4.86 3.64L7.01 2.20L8.86 4.42L12.00 3.80L12.86 1.03L15.40 1.54L15.14 4.42L17.80 6.20L20.36 4.86L21.80 7.01L19.58 8.86Z" fill="#6d8086" fill-rule="evenodd"/><circle cx="12" cy="12" r="3.6" fill="#252526"/></svg>
<div class="t" style="left:171.50px;top:1211.30px;font-size:24.6px;line-height:29.52px;color:#8b8b8b;font-family:'Liberation Sans',sans-serif;font-weight:normal;letter-spacing:0.75px">.env</div>
<div class="t" style="left:141.00px;top:1254.34px;font-size:23px;line-height:27.6px;color:#8dc149;font-family:'Liberation Sans',sans-serif;font-weight:normal;-webkit-text-stroke:0.9px #8dc149">$</div>
<div class="t" style="left:171.50px;top:1252.88px;font-size:24.6px;line-height:29.52px;color:#cccccc;font-family:'Liberation Sans',sans-serif;font-weight:normal;letter-spacing:0.75px">.env.example</div>
<svg style="left:135.50px;top:1297.22px;" width="24" height="24" viewBox="0 0 24 24"><path d="M12 1.5L22.5 12L12 22.5L1.5 12Z" fill="#41535b"/><path d="M9 6.5L16 13.5M11 9V16" stroke="#252526" stroke-width="1.8" stroke-linecap="round"/><circle cx="11" cy="16.5" r="1.6" fill="#252526"/></svg>
<div class="t" style="left:171.50px;top:1294.46px;font-size:24.6px;line-height:29.52px;color:#cccccc;font-family:'Liberation Sans',sans-serif;font-weight:normal;letter-spacing:0.75px">.gitignore</div>
<div class="t" style="left:136.50px;top:1338.20px;font-size:21px;line-height:25.2px;color:#cbcb5e;font-family:'Liberation Sans',sans-serif;font-weight:normal;letter-spacing:-0.6px;-webkit-text-stroke:0.4px #cbcb5e">{ }</div>
<div class="t" style="left:171.50px;top:1336.04px;font-size:24.6px;line-height:29.52px;color:#cccccc;font-family:'Liberation Sans',sans-serif;font-weight:normal;letter-spacing:0.75px">agent_config.json</div>
<svg style="left:136.50px;top:1380.38px;" width="22" height="24" viewBox="0 0 22 24"><path d="M6 1.5H16V11H21L11 22.5L1 11H6Z" fill="#519aba"/><path d="M8 1.5L11 4L14 1.5" fill="#252526"/></svg>
<div class="t" style="left:171.50px;top:1377.62px;font-size:24.6px;line-height:29.52px;color:#cccccc;font-family:'Liberation Sans',sans-serif;font-weight:normal;letter-spacing:0.75px">DEPLOYMENT.md</div>
<svg style="left:136.50px;top:1421.96px;" width="22" height="24" viewBox="0 0 22 24"><path d="M6 1.5H16V11H21L11 22.5L1 11H6Z" fill="#519aba"/><path d="M8 1.5L11 4L14 1.5" fill="#252526"/></svg>
<div class="t" style="left:171.50px;top:1419.20px;font-size:24.6px;line-height:29.52px;color:#cccccc;font-family:'Liberation Sans',sans-serif;font-weight:normal;letter-spacing:0.75px">DEV_GUIDE.md</div>
<svg style="left:132.50px;top:1463.54px;" width="30" height="24" viewBox="0 0 30 24"><path d="M1.5 11.5H22Q23.5 9 26.5 9.5L29 8.5L28 11.5Q26 13 24.5 13.5Q21 22 11 21.5Q3 21 1.5 11.5Z" fill="#e94e7c"/><rect x="5" y="7" width="3.5" height="3.5" fill="#e94e7c"/><rect x="9.5" y="7" width="3.5" height="3.5" fill="#e94e7c"/><rect x="14" y="7" width="3.5" height="3.5" fill="#e94e7c"/><rect x="9.5" y="2.5" width="3.5" height="3.5" fill="#e94e7c"/><rect x="14" y="2.5" width="3.5" height="3.5" fill="#e94e7c"/><circle cx="8" cy="15" r="1.3" fill="#252526"/></svg>
<div class="t" style="left:171.50px;top:1460.78px;font-size:24.6px;line-height:29.52px;color:#cccccc;font-family:'Liberation Sans',sans-serif;font-weight:normal;letter-spacing:0.75px">docker-compose.yml</div>
<div class="t" style="left:141.00px;top:1503.82px;font-size:23px;line-height:27.6px;color:#8dc149;font-family:'Liberation Sans',sans-serif;font-weight:normal;-webkit-text-stroke:0.9px #8dc149">$</div>
<div class="t" style="left:171.50px;top:1502.36px;font-size:24.6px;line-height:29.52px;color:#cccccc;font-family:'Liberation Sans',sans-serif;font-weight:normal;letter-spacing:0.75px">entrypoint.sh</div>
<svg style="left:135.50px;top:1544.70px;" width="24" height="28" viewBox="0 0 24 28"><circle cx="11" cy="5.5" r="4" fill="none" stroke="#cbcb41" stroke-width="2"/><path d="M6 9Q4 11 6 14L4 26L7 27L9 18L10 21L12 19L10 15Q12 11 9 9Z" fill="#cbcb41"/><path d="M13 9Q17 10 15 14L20 25L17 26L13 17Q11 13 13 9Z" fill="#cbcb41"/></svg>
<div class="t" style="left:171.50px;top:1543.94px;font-size:24.6px;line-height:29.52px;color:#cccccc;font-family:'Liberation Sans',sans-serif;font-weight:normal;letter-spacing:0.75px">LICENSE</div>
<svg style="left:135.50px;top:1588.28px;" width="24" height="24" viewBox="0 0 24 24"><circle cx="12" cy="12" r="10.5" fill="none" stroke="#519aba" stroke-width="2"/><circle cx="12" cy="7" r="1.8" fill="#519aba"/><path d="M9.5 10.5H13V17.5M9.5 17.5H15" fill="none" stroke="#519aba" stroke-width="2.4"/></svg>
<div class="t" style="left:171.50px;top:1585.52px;font-size:24.6px;line-height:29.52px;color:#cccccc;font-family:'Liberation Sans',sans-serif;font-weight:normal;letter-spacing:0.75px">README.md</div>
<svg style="left:140.50px;top:1631.86px;" width="20" height="20" viewBox="0 0 20 20"><path d="M3 3H16M3 8H11M3 13H16M3 18H12" stroke="#d4d7d6" stroke-width="2"/></svg>
<div class="t" style="left:171.50px;top:1627.10px;font-size:24.6px;line-height:29.52px;color:#cccccc;font-family:'Liberation Sans',sans-serif;font-weight:normal;letter-spacing:0.75px">requirements.txt</div>
<svg style="left:135.50px;top:1671.44px;" width="24" height="24" viewBox="0 0 24 24"><path d="M11.5 1.5Q6 1.5 6 4.5V7.5H12V8.5H3.5Q1 8.5 1 12.5Q1 17 3.5 17H5.5V14Q5.5 11 9 11H15Q17.5 11 17.5 8.5V4.5Q17.5 1.5 11.5 1.5Z" fill="#519aba"/><circle cx="9" cy="4.5" r="1.1" fill="#252526"/><path d="M12.5 22.5Q18 22.5 18 19.5V16.5H12V15.5H20.5Q23 15.5 23 11.5Q23 7 20.5 7H18.5V10Q18.5 13 15 13H9Q6.5 13 6.5 15.5V19.5Q6.5 22.5 12.5 22.5Z" fill="#519aba"/><circle cx="15" cy="19.5" r="1.1" fill="#252526"/></svg>
<div class="t" style="left:171.50px;top:1668.68px;font-size:24.6px;line-height:29.52px;color:#cccccc;font-family:'Liberation Sans',sans-serif;font-weight:normal;letter-spacing:0.75px">setup.py</div>
<svg style="left:135.50px;top:1713.02px;" width="24" height="24" viewBox="0 0 24 24"><path d="M11.5 1.5Q6 1.5 6 4.5V7.5H12V8.5H3.5Q1 8.5 1 12.5Q1 17 3.5 17H5.5V14Q5.5 11 9 11H15Q17.5 11 17.5 8.5V4.5Q17.5 1.5 11.5 1.5Z" fill="#519aba"/><circle cx="9" cy="4.5" r="1.1" fill="#252526"/><path d="M12.5 22.5Q18 22.5 18 19.5V16.5H12V15.5H20.5Q23 15.5 23 11.5Q23 7 20.5 7H18.5V10Q18.5 13 15 13H9Q6.5 13 6.5 15.5V19.5Q6.5 22.5 12.5 22.5Z" fill="#519aba"/><circle cx="15" cy="19.5" r="1.1" fill="#252526"/></svg>
<div class="t" style="left:171.50px;top:1710.26px;font-size:24.6px;line-height:29.52px;color:#cccccc;font-family:'Liberation Sans',sans-serif;font-weight:normal;letter-spacing:0.75px">verify_ai_attestation.py</div>
<svg style="left:129.50px;top:1756.60px;" width="20" height="20" viewBox="0 0 20 20"><path d="M3 3H16M3 8H11M3 13H16M3 18H12" stroke="#d4d7d6" stroke-width="2"/></svg>
<div class="t" style="left:156.00px;top:1751.84px;font-size:24.6px;line-height:29.52px;color:#cccccc;font-family:'Liberation Sans',sans-serif;font-weight:normal;letter-spacing:0.75px">.bash_history</div>
<div class="t" style="left:130.00px;top:1794.88px;font-size:23px;line-height:27.6px;color:#8dc149;font-family:'Liberation Sans',sans-serif;font-weight:normal;-webkit-text-stroke:0.9px #8dc149">$</div>
<div class="t" style="left:156.00px;top:1793.42px;font-size:24.6px;line-height:29.52px;color:#cccccc;font-family:'Liberation Sans',sans-serif;font-weight:normal;letter-spacing:0.75px">.bashrc</div>
<svg style="left:129.50px;top:1839.76px;" width="20" height="20" viewBox="0 0 20 20"><path d="M3 3H16M3 8H11M3 13H16M3 18H12" stroke="#d4d7d6" stroke-width="2"/></svg>
<div class="t" style="left:156.00px;top:1835.00px;font-size:24.6px;line-height:29.52px;color:#cccccc;font-family:'Liberation Sans',sans-serif;font-weight:normal;letter-spacing:0.75px">.Xauthority</div>
<div class="a" style="left:92.00px;top:393.20px;width:567.00px;height:108.00px;background:#252526;"></div>
<div class="a" style="left:92px;top:500.2px;width:567px;height:6px;background:linear-gradient(rgba(0,0,0,0.45),rgba(0,0,0,0))"></div>
<svg style="left:125.00px;top:408.60px;" width="20" height="12" viewBox="0 0 20 12"><path d="M2 2.5L10 10L18 2.5" fill="none" stroke="#c5c5c5" stroke-width="2.3" stroke-linecap="round" stroke-linejoin="round"/></svg>
<div class="t" style="left:156.00px;top:399.84px;font-size:24.6px;line-height:29.52px;color:#cccccc;font-family:'Liberation Sans',sans-serif;font-weight:normal;letter-spacing:0.75px">babylon</div>
<svg style="left:155.00px;top:474.20px;" width="20" height="12" viewBox="0 0 20 12"><path d="M2 2.5L10 10L18 2.5" fill="none" stroke="#c5c5c5" stroke-width="2.3" stroke-linecap="round" stroke-linejoin="round"/></svg>
<div class="t" style="left:186.70px;top:465.44px;font-size:24.6px;line-height:29.52px;color:#cccccc;font-family:'Liberation Sans',sans-serif;font-weight:normal;letter-spacing:0.75px">viewer</div>
<div class="a" style="left:92.00px;top:435.70px;width:567.00px;height:37.50px;background:#252526;"></div>
<svg style="left:140.00px;top:450.20px;" width="20" height="12" viewBox="0 0 20 12"><path d="M2 2.5L10 10L18 2.5" fill="none" stroke="#c5c5c5" stroke-width="2.3" stroke-linecap="round" stroke-linejoin="round"/></svg>
<div class="t" style="left:171.50px;top:441.44px;font-size:24.6px;line-height:29.52px;color:#cccccc;font-family:'Liberation Sans',sans-serif;font-weight:normal;letter-spacing:0.75px">src</div>
<div class="a" style="left:92.00px;top:1869.70px;width:567.00px;height:1.60px;background:#3c3c3c;"></div>
<svg style="left:104.00px;top:1881.20px;" width="12" height="20" viewBox="0 0 12 20"><path d="M2.5 2L10 10L2.5 18" fill="none" stroke="#c5c5c5" stroke-width="2.3" stroke-linecap="round" stroke-linejoin="round"/></svg>
<div class="t" style="left:130.00px;top:1878.30px;font-size:21.5px;line-height:25.8px;color:#cccccc;font-family:'Liberation Sans',sans-serif;font-weight:bold;">OUTLINE</div>
<div class="a" style="left:92.00px;top:1911.70px;width:567.00px;height:1.60px;background:#3c3c3c;"></div>
<svg style="left:104.00px;top:1923.20px;" width="12" height="20" viewBox="0 0 12 20"><path d="M2.5 2L10 10L2.5 18" fill="none" stroke="#c5c5c5" stroke-width="2.3" stroke-linecap="round" stroke-linejoin="round"/></svg>
<div class="t" style="left:130.00px;top:1920.30px;font-size:21.5px;line-height:25.8px;color:#cccccc;font-family:'Liberation Sans',sans-serif;font-weight:bold;">TIMELINE</div>
<div class="a" style="left:659.00px;top:284.20px;width:2970.00px;height:1669.00px;background:#1e1e1e;"></div>
<div class="a" style="left:659.00px;top:284.20px;width:2970.00px;height:66.00px;background:#252526;"></div>
<div class="a" style="left:659.00px;top:284.20px;width:223.00px;height:66.00px;background:#1e1e1e;"></div>
<svg style="left:683.50px;top:305.70px;" width="24" height="24" viewBox="0 0 24 24"><path d="M20.20 12.00L22.97 12.86L22.46 15.40L19.58 15.14L17.80 17.80L19.14 20.36L16.99 21.80L15.14 19.58L12.00 20.20L11.14 22.97L8.60 22.46L8.86 19.58L6.20 17.80L3.64 19.14L2.20 16.99L4.42 15.14L3.80 12.00L1.03 11.14L1.54 8.60L4.42 8.86L6.20 6.20L4.86 3.64L7.01 2.20L8.86 4.42L12.00 3.80L12.86 1.03L15.40 1.54L15.14 4.42L17.80 6.20L20.36 4.86L21.80 7.01L19.58 8.86Z" fill="#6d8086" fill-rule="evenodd"/><circle cx="12" cy="12" r="3.6" fill="#252526"/></svg>
<div class="t" style="left:719.50px;top:303.12px;font-size:24.3px;line-height:29.16px;color:#9a9a9a;font-family:'Liberation Sans',sans-serif;font-weight:normal;letter-spacing:0.6px">.env</div>
<svg style="left:847.00px;top:307.70px;" width="20" height="20" viewBox="0 0 20 20"><path d="M2.5 2.5L17.5 17.5M17.5 2.5L2.5 17.5" stroke="#ffffff" stroke-width="2.3" stroke-linecap="round"/></svg>
<svg style="left:3524.00px;top:303.20px;" width="27" height="27" viewBox="0 0 27 27"><rect x="1.5" y="1.5" width="24" height="24" rx="2.5" fill="none" stroke="#cccccc" stroke-width="2.2"/><path d="M13.5 1.5V25.5" stroke="#cccccc" stroke-width="2.2"/></svg>
<svg style="left:3574.00px;top:313.20px;" width="26" height="8" viewBox="0 0 26 8"><circle cx="3.5" cy="4" r="2.3" fill="#cccccc"/><circle cx="13" cy="4" r="2.3" fill="#cccccc"/><circle cx="22.5" cy="4" r="2.3" fill="#cccccc"/></svg>
<div class="t" style="left:689.00px;top:357.44px;font-size:24.6px;line-height:29.52px;color:#a9a9a9;font-family:'Liberation Sans',sans-serif;font-weight:normal;letter-spacing:1.35px">erc-8004-tee-agent</div>
<svg style="left:932.00px;top:362.20px;" width="12" height="20" viewBox="0 0 12 20"><path d="M2.5 2L10 10L2.5 18" fill="none" stroke="#a9a9a9" stroke-width="2.1" stroke-linecap="round" stroke-linejoin="round"/></svg>
<svg style="left:959.00px;top:360.20px;" width="24" height="24" viewBox="0 0 24 24"><path d="M20.20 12.00L22.97 12.86L22.46 15.40L19.58 15.14L17.80 17.80L19.14 20.36L16.99 21.80L15.14 19.58L12.00 20.20L11.14 22.97L8.60 22.46L8.86 19.58L6.20 17.80L3.64 19.14L2.20 16.99L4.42 15.14L3.80 12.00L1.03 11.14L1.54 8.60L4.42 8.86L6.20 6.20L4.86 3.64L7.01 2.20L8.86 4.42L12.00 3.80L12.86 1.03L15.40 1.54L15.14 4.42L17.80 6.20L20.36 4.86L21.80 7.01L19.58 8.86Z" fill="#6d8086" fill-rule="evenodd"/><circle cx="12" cy="12" r="3.6" fill="#252526"/></svg>
<div class="t" style="left:994.50px;top:357.62px;font-size:24.3px;line-height:29.16px;color:#a9a9a9;font-family:'Liberation Sans',sans-serif;font-weight:normal;letter-spacing:0.6px">.env</div>
<div class="a" style="left:783.00px;top:971.50px;width:2592.00px;height:2.20px;background:#2a2a2a;"></div>
<div class="a" style="left:783.00px;top:1001.00px;width:2592.00px;height:2.20px;background:#2a2a2a;"></div>
<div class="a" style="left:659px;top:350.2px;width:2724px;height:1011px;overflow:hidden">
<div class="t m" style="right:2649.5px;top:43.10px;font-size:22.75px;line-height:34px;color:#858585;font-family:'Liberation Mono',monospace;-webkit-text-stroke:0.35px currentColor">1</div>
<div class="t m" style="left:124px;top:43.10px;font-size:22.75px;line-height:34px;font-family:'Liberation Mono',monospace;-webkit-text-stroke:0.35px currentColor"><span style="color:#6a9955"># Production Deployment Configuration (Phala CVM)</span></div>
<div class="t m" style="right:2649.5px;top:77.05px;font-size:22.75px;line-height:34px;color:#858585;font-family:'Liberation Mono',monospace;-webkit-text-stroke:0.35px currentColor">2</div>
<div class="t m" style="left:124px;top:77.05px;font-size:22.75px;line-height:34px;font-family:'Liberation Mono',monospace;-webkit-text-stroke:0.35px currentColor"><span style="color:#6a9955"># These variables should be set as SECRETS on phala.com</span></div>
<div class="t m" style="right:2649.5px;top:111.00px;font-size:22.75px;line-height:34px;color:#858585;font-family:'Liberation Mono',monospace;-webkit-text-stroke:0.35px currentColor">3</div>
<div class="t m" style="right:2649.5px;top:144.95px;font-size:22.75px;line-height:34px;color:#858585;font-family:'Liberation Mono',monospace;-webkit-text-stroke:0.35px currentColor">4</div>
<div class="t m" style="left:124px;top:144.95px;font-size:22.75px;line-height:34px;font-family:'Liberation Mono',monospace;-webkit-text-stroke:0.35px currentColor"><span style="color:#6a9955"># </span><span style="display:inline-block;width:22.3px;height:10px;position:relative"><svg style="position:absolute;left:-0.5px;top:-17px" width="24" height="22" viewBox="0 0 27 24"><path d="M13.5 1.5L26 23H1Z" fill="#f4c31d" stroke="#f4c31d" stroke-width="1.5" stroke-linejoin="round"/><path d="M13.5 8.5V16" stroke="#1e1e1e" stroke-width="2.6" stroke-linecap="round"/><circle cx="13.5" cy="19.6" r="1.4" fill="#1e1e1e"/></svg></span><span style="color:#6a9955"> REQUIRED: Set as secrets on Phala deployment</span></div>
<div class="t m" style="right:2649.5px;top:178.90px;font-size:22.75px;line-height:34px;color:#858585;font-family:'Liberation Mono',monospace;-webkit-text-stroke:0.35px currentColor">5</div>
<div class="t m" style="left:124px;top:178.90px;font-size:22.75px;line-height:34px;font-family:'Liberation Mono',monospace;-webkit-text-stroke:0.35px currentColor"><span style="color:#569cd6">GITHUB_REPO</span><span style="color:#d4d4d4">=</span><span style="color:#d4d4d4;text-decoration:underline;text-underline-offset:4px;text-decoration-thickness:1.5px;text-decoration-skip-ink:none">https://github.com/YOUR_USERNAME/YOUR_REPO.git</span></div>
<div class="t m" style="right:2649.5px;top:212.85px;font-size:22.75px;line-height:34px;color:#858585;font-family:'Liberation Mono',monospace;-webkit-text-stroke:0.35px currentColor">6</div>
<div class="t m" style="left:124px;top:212.85px;font-size:22.75px;line-height:34px;font-family:'Liberation Mono',monospace;-webkit-text-stroke:0.35px currentColor"><span style="color:#569cd6">GIT_COMMIT_HASH</span><span style="color:#d4d4d4">=</span><span style="color:#d4d4d4">YOUR_PRODUCTION_COMMIT_HASH</span></div>
<div class="t m" style="right:2649.5px;top:246.80px;font-size:22.75px;line-height:34px;color:#858585;font-family:'Liberation Mono',monospace;-webkit-text-stroke:0.35px currentColor">7</div>
<div class="t m" style="left:124px;top:246.80px;font-size:22.75px;line-height:34px;font-family:'Liberation Mono',monospace;-webkit-text-stroke:0.35px currentColor"><span style="color:#569cd6">AGENT_SALT</span><span style="color:#d4d4d4">=</span><span style="color:#d4d4d4">your-unique-production-salt-here</span></div>
<div class="t m" style="right:2649.5px;top:280.75px;font-size:22.75px;line-height:34px;color:#858585;font-family:'Liberation Mono',monospace;-webkit-text-stroke:0.35px currentColor">8</div>
<div class="t m" style="right:2649.5px;top:314.70px;font-size:22.75px;line-height:34px;color:#858585;font-family:'Liberation Mono',monospace;-webkit-text-stroke:0.35px currentColor">9</div>
<div class="t m" style="left:124px;top:314.70px;font-size:22.75px;line-height:34px;font-family:'Liberation Mono',monospace;-webkit-text-stroke:0.35px currentColor"><span style="color:#6a9955"># Agent Configuration (auto-populated by Phala)</span></div>
<div class="t m" style="right:2649.5px;top:348.65px;font-size:22.75px;line-height:34px;color:#858585;font-family:'Liberation Mono',monospace;-webkit-text-stroke:0.35px currentColor">10</div>
<div class="t m" style="left:124px;top:348.65px;font-size:22.75px;line-height:34px;font-family:'Liberation Mono',monospace;-webkit-text-stroke:0.35px currentColor"><span style="color:#6a9955"># AGENT_DOMAIN will be auto-set when deploying to production: ${DSTACK_APP_ID}-8000.${DSTACK_GATEWAY_DOMAIN}</span></div>
<div class="t m" style="right:2649.5px;top:382.60px;font-size:22.75px;line-height:34px;color:#858585;font-family:'Liberation Mono',monospace;-webkit-text-stroke:0.35px currentColor">11</div>
<div class="t m" style="left:124px;top:382.60px;font-size:22.75px;line-height:34px;font-family:'Liberation Mono',monospace;-webkit-text-stroke:0.35px currentColor"><span style="color:#6a9955"># In VibeVM set the address to your domain e.g. AGENT_DOMAIN=7f56b605ad6c5f28743a6dac6481cf272f2f610a-8000.dstack-pha-prod9.phala.network</span></div>
<div class="t m" style="right:2649.5px;top:416.55px;font-size:22.75px;line-height:34px;color:#858585;font-family:'Liberation Mono',monospace;-webkit-text-stroke:0.35px currentColor">12</div>
<div class="t m" style="left:124px;top:416.55px;font-size:22.75px;line-height:34px;font-family:'Liberation Mono',monospace;-webkit-text-stroke:0.35px currentColor"><span style="color:#569cd6">AGENT_DOMAIN</span><span style="color:#d4d4d4">=</span><span style="color:#d4d4d4">6ff54f6770a95e28ed7b9bba1460b09b0f35c0e4-8000.dstack-pha-prod9.phala.network</span></div>
<div class="t m" style="right:2649.5px;top:450.50px;font-size:22.75px;line-height:34px;color:#858585;font-family:'Liberation Mono',monospace;-webkit-text-stroke:0.35px currentColor">13</div>
<div class="t m" style="right:2649.5px;top:484.45px;font-size:22.75px;line-height:34px;color:#858585;font-family:'Liberation Mono',monospace;-webkit-text-stroke:0.35px currentColor">14</div>
<div class="t m" style="left:124px;top:484.45px;font-size:22.75px;line-height:34px;font-family:'Liberation Mono',monospace;-webkit-text-stroke:0.35px currentColor"><span style="color:#6a9955"># Trust Center Configuration</span></div>
<div class="t m" style="right:2649.5px;top:518.40px;font-size:22.75px;line-height:34px;color:#858585;font-family:'Liberation Mono',monospace;-webkit-text-stroke:0.35px currentColor">15</div>
<div class="t m" style="left:124px;top:518.40px;font-size:22.75px;line-height:34px;font-family:'Liberation Mono',monospace;-webkit-text-stroke:0.35px currentColor"><span style="color:#6a9955"># URL to the Phala Network TEE attestation widget</span></div>
<div class="t m" style="right:2649.5px;top:552.35px;font-size:22.75px;line-height:34px;color:#858585;font-family:'Liberation Mono',monospace;-webkit-text-stroke:0.35px currentColor">16</div>
<div class="t m" style="left:124px;top:552.35px;font-size:22.75px;line-height:34px;font-family:'Liberation Mono',monospace;-webkit-text-stroke:0.35px currentColor"><span style="color:#6a9955"># Go to </span><span style="color:#6a9955;text-decoration:underline;text-underline-offset:4px;text-decoration-thickness:1.5px;text-decoration-skip-ink:none">https://trust.phala.com/app/</span><span style="color:#6a9955">&lt;dstack-app-id&gt; to create your custom widget</span></div>
<div class="t m" style="right:2649.5px;top:586.30px;font-size:22.75px;line-height:34px;color:#858585;font-family:'Liberation Mono',monospace;-webkit-text-stroke:0.35px currentColor">17</div>
<div class="t m" style="left:124px;top:586.30px;font-size:22.75px;line-height:34px;font-family:'Liberation Mono',monospace;-webkit-text-stroke:0.35px currentColor"><span style="color:#6a9955"># Format: </span><span style="color:#6a9955;text-decoration:underline;text-underline-offset:4px;text-decoration-thickness:1.5px;text-decoration-skip-ink:none">https://trust.phala.com/widget/app/</span><span style="color:#6a9955">&lt;dstack-app-id&gt;/&lt;widget-id&gt;</span></div>
<div class="t m" style="right:2649.5px;top:620.25px;font-size:22.75px;line-height:34px;color:#c6c6c6;font-family:'Liberation Mono',monospace;-webkit-text-stroke:0.35px currentColor">18</div>
<div class="t m" style="left:124px;top:620.25px;font-size:22.75px;line-height:34px;font-family:'Liberation Mono',monospace;-webkit-text-stroke:0.35px currentColor"><span style="color:#569cd6">TRUST_CENTER_URL</span><span style="color:#d4d4d4">=</span><span style="color:#d4d4d4;text-decoration:underline;text-underline-offset:4px;text-decoration-thickness:1.5px;text-decoration-skip-ink:none">https://trust.phala.com/widget/app/6ff54f6770a95e28ed7b9bba1460b09b0f35c0e4</span></div>
<div class="t m" style="right:2649.5px;top:654.20px;font-size:22.75px;line-height:34px;color:#858585;font-family:'Liberation Mono',monospace;-webkit-text-stroke:0.35px currentColor">19</div>
<div class="t m" style="right:2649.5px;top:688.15px;font-size:22.75px;line-height:34px;color:#858585;font-family:'Liberation Mono',monospace;-webkit-text-stroke:0.35px currentColor">20</div>
<div class="t m" style="left:124px;top:688.15px;font-size:22.75px;line-height:34px;font-family:'Liberation Mono',monospace;-webkit-text-stroke:0.35px currentColor"><span style="color:#6a9955"># Blockchain Configuration</span></div>
<div class="t m" style="right:2649.5px;top:722.10px;font-size:22.75px;line-height:34px;color:#858585;font-family:'Liberation Mono',monospace;-webkit-text-stroke:0.35px currentColor">21</div>
<div class="t m" style="left:124px;top:722.10px;font-size:22.75px;line-height:34px;font-family:'Liberation Mono',monospace;-webkit-text-stroke:0.35px currentColor"><span style="color:#569cd6">RPC_URL</span><span style="color:#d4d4d4">=</span><span style="color:#d4d4d4;text-decoration:underline;text-underline-offset:4px;text-decoration-thickness:1.5px;text-decoration-skip-ink:none">https://1rpc.io/sepolia</span></div>
<div class="t m" style="right:2649.5px;top:756.05px;font-size:22.75px;line-height:34px;color:#858585;font-family:'Liberation Mono',monospace;-webkit-text-stroke:0.35px currentColor">22</div>
<div class="t m" style="left:124px;top:756.05px;font-size:22.75px;line-height:34px;font-family:'Liberation Mono',monospace;-webkit-text-stroke:0.35px currentColor"><span style="color:#569cd6">CHAIN_ID</span><span style="color:#d4d4d4">=</span><span style="color:#d4d4d4">11155111</span></div>
<div class="t m" style="right:2649.5px;top:790.00px;font-size:22.75px;line-height:34px;color:#858585;font-family:'Liberation Mono',monospace;-webkit-text-stroke:0.35px currentColor">23</div>
<div class="t m" style="right:2649.5px;top:823.95px;font-size:22.75px;line-height:34px;color:#858585;font-family:'Liberation Mono',monospace;-webkit-text-stroke:0.35px currentColor">24</div>
<div class="t m" style="left:124px;top:823.95px;font-size:22.75px;line-height:34px;font-family:'Liberation Mono',monospace;-webkit-text-stroke:0.35px currentColor"><span style="color:#6a9955"># Contract Addresses (Base Sepolia)</span></div>
<div class="t m" style="right:2649.5px;top:857.90px;font-size:22.75px;line-height:34px;color:#858585;font-family:'Liberation Mono',monospace;-webkit-text-stroke:0.35px currentColor">25</div>
<div class="t m" style="left:124px;top:857.90px;font-size:22.75px;line-height:34px;font-family:'Liberation Mono',monospace;-webkit-text-stroke:0.35px currentColor"><span style="color:#6a9955"># IDENTITY_REGISTRY_ADDRESS=0xd08eC0f6F00751993169103d2240A6E3aF6920f4</span></div>
<div class="t m" style="right:2649.5px;top:891.85px;font-size:22.75px;line-height:34px;color:#858585;font-family:'Liberation Mono',monospace;-webkit-text-stroke:0.35px currentColor">26</div>
<div class="t m" style="left:124px;top:891.85px;font-size:22.75px;line-height:34px;font-family:'Liberation Mono',monospace;-webkit-text-stroke:0.35px currentColor"><span style="color:#6a9955"># TEE_REGISTRY_ADDRESS=0x03eCA4d903Adc96440328C2E3a18B71EB0AFa60D</span></div>
<div class="t m" style="right:2649.5px;top:925.80px;font-size:22.75px;line-height:34px;color:#858585;font-family:'Liberation Mono',monospace;-webkit-text-stroke:0.35px currentColor">27</div>
<div class="t m" style="left:124px;top:925.80px;font-size:22.75px;line-height:34px;font-family:'Liberation Mono',monospace;-webkit-text-stroke:0.35px currentColor"><span style="color:#6a9955"># TEE_VERIFIER_ADDRESS=0x481ce1a6EEC3016d1E61725B1527D73Df1c393a5</span></div>
<div class="t m" style="right:2649.5px;top:959.75px;font-size:22.75px;line-height:34px;color:#858585;font-family:'Liberation Mono',monospace;-webkit-text-stroke:0.35px currentColor">28</div>
<div class="t m" style="right:2649.5px;top:993.70px;font-size:22.75px;line-height:34px;color:#858585;font-family:'Liberation Mono',monospace;-webkit-text-stroke:0.35px currentColor">29</div>
<div class="t m" style="left:124px;top:993.70px;font-size:22.75px;line-height:34px;font-family:'Liberation Mono',monospace;-webkit-text-stroke:0.35px currentColor"><span style="color:#6a9955"># Contract Addresses ETH Sepolia</span></div>
<div class="t m" style="right:2649.5px;top:1027.65px;font-size:22.75px;line-height:34px;color:#858585;font-family:'Liberation Mono',monospace;-webkit-text-stroke:0.35px currentColor">30</div>
</div>
<div class="a" style="left:767.00px;top:819.70px;width:1302.00px;height:204.50px;background:transparent;border:8.5px solid #ee2b1d;border-radius:18px;filter:url(#rough)"></div>
<div class="a" style="left:3383.20px;top:392.10px;width:219.5px;height:290px;overflow:hidden">
<div style="position:absolute;left:0;top:0;width:2000px;height:1600px;transform:scale(0.13770,0.17577);transform-origin:0 0">
<div class="t" style="left:0;top:0.00px;font-size:22.75px;line-height:21.5px;font-family:'Liberation Mono',monospace;font-weight:bold;opacity:0.85"><span style="color:#6a9955"># Production Deployment Configuration (Phala CVM)</span></div>
<div class="t" style="left:0;top:21.50px;font-size:22.75px;line-height:21.5px;font-family:'Liberation Mono',monospace;font-weight:bold;opacity:0.85"><span style="color:#6a9955"># These variables should be set as SECRETS on phala.com</span></div>
<div class="t" style="left:0;top:64.50px;font-size:22.75px;line-height:21.5px;font-family:'Liberation Mono',monospace;font-weight:bold;opacity:0.85"><span style="color:#6a9955"># </span><span style="color:#6a9955">!! REQUIRED: Set as secrets on Phala deployment</span></div>
<div class="t" style="left:0;top:86.00px;font-size:22.75px;line-height:21.5px;font-family:'Liberation Mono',monospace;font-weight:bold;opacity:0.85"><span style="color:#569cd6">GITHUB_REPO</span><span style="color:#d4d4d4">=</span><span style="color:#d4d4d4;text-decoration:none;text-underline-offset:4px;text-decoration-thickness:1.5px;text-decoration-skip-ink:none">https://github.com/YOUR_USERNAME/YOUR_REPO.git</span></div>
<div class="t" style="left:0;top:107.50px;font-size:22.75px;line-height:21.5px;font-family:'Liberation Mono',monospace;font-weight:bold;opacity:0.85"><span style="color:#569cd6">GIT_COMMIT_HASH</span><span style="color:#d4d4d4">=</span><span style="color:#d4d4d4">YOUR_PRODUCTION_COMMIT_HASH</span></div>
<div class="t" style="left:0;top:129.00px;font-size:22.75px;line-height:21.5px;font-family:'Liberation Mono',monospace;font-weight:bold;opacity:0.85"><span style="color:#569cd6">AGENT_SALT</span><span style="color:#d4d4d4">=</span><span style="color:#d4d4d4">your-unique-production-salt-here</span></div>
<div class="t" style="left:0;top:172.00px;font-size:22.75px;line-height:21.5px;font-family:'Liberation Mono',monospace;font-weight:bold;opacity:0.85"><span style="color:#6a9955"># Agent Configuration (auto-populated by Phala)</span></div>
<div class="t" style="left:0;top:193.50px;font-size:22.75px;line-height:21.5px;font-family:'Liberation Mono',monospace;font-weight:bold;opacity:0.85"><span style="color:#6a9955"># AGENT_DOMAIN will be auto-set when deploying to production: ${DSTACK_APP_ID}-8000.${DSTACK_GATEWAY_DOMAIN}</span></div>
<div class="t" style="left:0;top:215.00px;font-size:22.75px;line-height:21.5px;font-family:'Liberation Mono',monospace;font-weight:bold;opacity:0.85"><span style="color:#6a9955"># In VibeVM set the address to your domain e.g. AGENT_DOMAIN=7f56b605ad6c5f28743a6dac6481cf272f2f610a-8000.dstack-pha-prod9.phala.network</span></div>
<div class="t" style="left:0;top:236.50px;font-size:22.75px;line-height:21.5px;font-family:'Liberation Mono',monospace;font-weight:bold;opacity:0.85"><span style="color:#569cd6">AGENT_DOMAIN</span><span style="color:#d4d4d4">=</span><span style="color:#d4d4d4">6ff54f6770a95e28ed7b9bba1460b09b0f35c0e4-8000.dstack-pha-prod9.phala.network</span></div>
<div class="t" style="left:0;top:279.50px;font-size:22.75px;line-height:21.5px;font-family:'Liberation Mono',monospace;font-weight:bold;opacity:0.85"><span style="color:#6a9955"># Trust Center Configuration</span></div>
<div class="t" style="left:0;top:301.00px;font-size:22.75px;line-height:21.5px;font-family:'Liberation Mono',monospace;font-weight:bold;opacity:0.85"><span style="color:#6a9955"># URL to the Phala Network TEE attestation widget</span></div>
<div class="t" style="left:0;top:322.50px;font-size:22.75px;line-height:21.5px;font-family:'Liberation Mono',monospace;font-weight:bold;opacity:0.85"><span style="color:#6a9955"># Go to </span><span style="color:#6a9955;text-decoration:none;text-underline-offset:4px;text-decoration-thickness:1.5px;text-decoration-skip-ink:none">https://trust.phala.com/app/</span><span style="color:#6a9955">&lt;dstack-app-id&gt; to create your custom widget</span></div>
<div class="t" style="left:0;top:344.00px;font-size:22.75px;line-height:21.5px;font-family:'Liberation Mono',monospace;font-weight:bold;opacity:0.85"><span style="color:#6a9955"># Format: </span><span style="color:#6a9955;text-decoration:none;text-underline-offset:4px;text-decoration-thickness:1.5px;text-decoration-skip-ink:none">https://trust.phala.com/widget/app/</span><span style="color:#6a9955">&lt;dstack-app-id&gt;/&lt;widget-id&gt;</span></div>
<div class="t" style="left:0;top:365.50px;font-size:22.75px;line-height:21.5px;font-family:'Liberation Mono',monospace;font-weight:bold;opacity:0.85"><span style="color:#569cd6">TRUST_CENTER_URL</span><span style="color:#d4d4d4">=</span><span style="color:#d4d4d4;text-decoration:none;text-underline-offset:4px;text-decoration-thickness:1.5px;text-decoration-skip-ink:none">https://trust.phala.com/widget/app/6ff54f6770a95e28ed7b9bba1460b09b0f35c0e4</span></div>
<div class="t" style="left:0;top:408.50px;font-size:22.75px;line-height:21.5px;font-family:'Liberation Mono',monospace;font-weight:bold;opacity:0.85"><span style="color:#6a9955"># Blockchain Configuration</span></div>
<div class="t" style="left:0;top:430.00px;font-size:22.75px;line-height:21.5px;font-family:'Liberation Mono',monospace;font-weight:bold;opacity:0.85"><span style="color:#569cd6">RPC_URL</span><span style="color:#d4d4d4">=</span><span style="color:#d4d4d4;text-decoration:none;text-underline-offset:4px;text-decoration-thickness:1.5px;text-decoration-skip-ink:none">https://1rpc.io/sepolia</span></div>
<div class="t" style="left:0;top:451.50px;font-size:22.75px;line-height:21.5px;font-family:'Liberation Mono',monospace;font-weight:bold;opacity:0.85"><span style="color:#569cd6">CHAIN_ID</span><span style="color:#d4d4d4">=</span><span style="color:#d4d4d4">11155111</span></div>
<div class="t" style="left:0;top:494.50px;font-size:22.75px;line-height:21.5px;font-family:'Liberation Mono',monospace;font-weight:bold;opacity:0.85"><span style="color:#6a9955"># Contract Addresses (Base Sepolia)</span></div>
<div class="t" style="left:0;top:516.00px;font-size:22.75px;line-height:21.5px;font-family:'Liberation Mono',monospace;font-weight:bold;opacity:0.85"><span style="color:#6a9955"># IDENTITY_REGISTRY_ADDRESS=0xd08eC0f6F00751993169103d2240A6E3aF6920f4</span></div>
<div class="t" style="left:0;top:537.50px;font-size:22.75px;line-height:21.5px;font-family:'Liberation Mono',monospace;font-weight:bold;opacity:0.85"><span style="color:#6a9955"># TEE_REGISTRY_ADDRESS=0x03eCA4d903Adc96440328C2E3a18B71EB0AFa60D</span></div>
<div class="t" style="left:0;top:559.00px;font-size:22.75px;line-height:21.5px;font-family:'Liberation Mono',monospace;font-weight:bold;opacity:0.85"><span style="color:#6a9955"># TEE_VERIFIER_ADDRESS=0x481ce1a6EEC3016d1E61725B1527D73Df1c393a5</span></div>
<div class="t" style="left:0;top:602.00px;font-size:22.75px;line-height:21.5px;font-family:'Liberation Mono',monospace;font-weight:bold;opacity:0.85"><span style="color:#6a9955"># Contract Addresses ETH Sepolia</span></div>
<div class="t" style="left:0;top:623.50px;font-size:22.75px;line-height:21.5px;font-family:'Liberation Mono',monospace;font-weight:bold;opacity:0.85"><span style="color:#569cd6">IDENTITY_REGISTRY_ADDRESS</span><span style="color:#d4d4d4">=</span><span style="color:#d4d4d4">0x8004a6090Cd10A7288092483047B097295Fb8847</span></div>
<div class="t" style="left:0;top:645.00px;font-size:22.75px;line-height:21.5px;font-family:'Liberation Mono',monospace;font-weight:bold;opacity:0.85"><span style="color:#6a9955"># DefaultTEEVerifier/Deployment: 0x1c3a8e2Ee1c1d0C6F3E5b9bA4f8D0c3f</span></div>
<div class="t" style="left:0;top:666.50px;font-size:22.75px;line-height:21.5px;font-family:'Liberation Mono',monospace;font-weight:bold;opacity:0.85"><span style="color:#6a9955"># TEERegistry: 0x03eCA4d903Adc96440328C2E3a18B71EB0AFa60D</span></div>
<div class="t" style="left:0;top:688.00px;font-size:22.75px;line-height:21.5px;font-family:'Liberation Mono',monospace;font-weight:bold;opacity:0.85"><span style="color:#6a9955"># ERC8004 Verifier: 0x481ce1a6EEC3016d1E61725B1527D73Df1c3</span></div>
<div class="t" style="left:0;top:709.50px;font-size:22.75px;line-height:21.5px;font-family:'Liberation Mono',monospace;font-weight:bold;opacity:0.85"><span style="color:#6a9955"># Verifier: 0xd08eC0f6F00751993169103d2240A6E3aF6920f4</span></div>
<div class="t" style="left:0;top:731.00px;font-size:22.75px;line-height:21.5px;font-family:'Liberation Mono',monospace;font-weight:bold;opacity:0.85"><span style="color:#569cd6">TEE_REGISTRY_ADDRESS</span><span style="color:#d4d4d4">=</span><span style="color:#d4d4d4">0x8004a6090Cd10A7288092483047B097295Fb8847</span></div>
<div class="t" style="left:0;top:752.50px;font-size:22.75px;line-height:21.5px;font-family:'Liberation Mono',monospace;font-weight:bold;opacity:0.85"><span style="color:#569cd6">TEE_VERIFIER_ADDRESS</span><span style="color:#d4d4d4">=</span><span style="color:#d4d4d4">0x8004b7261Ab20B8399103594158C108306Gc9958</span></div>
<div class="t" style="left:0;top:795.50px;font-size:22.75px;line-height:21.5px;font-family:'Liberation Mono',monospace;font-weight:bold;opacity:0.85"><span style="color:#6a9955"># Server Configuration (CVM Defaults)</span></div>
<div class="t" style="left:0;top:817.00px;font-size:22.75px;line-height:21.5px;font-family:'Liberation Mono',monospace;font-weight:bold;opacity:0.85"><span style="color:#569cd6">AGENT_HOST</span><span style="color:#d4d4d4">=</span><span style="color:#d4d4d4">0.0.0.0</span></div>
<div class="t" style="left:0;top:838.50px;font-size:22.75px;line-height:21.5px;font-family:'Liberation Mono',monospace;font-weight:bold;opacity:0.85"><span style="color:#6a9955"># For production deploy, set to 80. For VibeVM set to 8000</span></div>
<div class="t" style="left:0;top:860.00px;font-size:22.75px;line-height:21.5px;font-family:'Liberation Mono',monospace;font-weight:bold;opacity:0.85"><span style="color:#569cd6">AGENT_PORT</span><span style="color:#d4d4d4">=</span><span style="color:#d4d4d4">8000</span></div>
<div class="t" style="left:0;top:903.00px;font-size:22.75px;line-height:21.5px;font-family:'Liberation Mono',monospace;font-weight:bold;opacity:0.85"><span style="color:#6a9955"># Code Update Policy</span></div>
<div class="t" style="left:0;top:924.50px;font-size:22.75px;line-height:21.5px;font-family:'Liberation Mono',monospace;font-weight:bold;opacity:0.85"><span style="color:#569cd6">UPDATE_CODE</span><span style="color:#d4d4d4">=</span><span style="color:#d4d4d4">true</span></div>
<div class="t" style="left:0;top:967.50px;font-size:22.75px;line-height:21.5px;font-family:'Liberation Mono',monospace;font-weight:bold;opacity:0.85"><span style="color:#6a9955"># RedPill Confidential AI API Key</span></div>
<div class="t" style="left:0;top:989.00px;font-size:22.75px;line-height:21.5px;font-family:'Liberation Mono',monospace;font-weight:bold;opacity:0.85"><span style="color:#569cd6">REDPILL_API_KEY</span><span style="color:#d4d4d4">=</span><span style="color:#d4d4d4">sk-aHNgfGzwgfYsLdHf2sh8c5sZ3h6UNoht78Y7Yaoewkw6</span></div>
<div class="t" style="left:0;top:1010.50px;font-size:22.75px;line-height:21.5px;font-family:'Liberation Mono',monospace;font-weight:bold;opacity:0.85"><span style="color:#569cd6">REDPILL_API_URL</span><span style="color:#d4d4d4">=</span><span style="color:#d4d4d4">https://api.redpill.ai</span></div>
<div class="t" style="left:0;top:1053.50px;font-size:22.75px;line-height:21.5px;font-family:'Liberation Mono',monospace;font-weight:bold;opacity:0.85"><span style="color:#6a9955"># AI Model Settings (for ai_generate and execute_task types)</span></div>
<div class="t" style="left:0;top:1075.00px;font-size:22.75px;line-height:21.5px;font-family:'Liberation Mono',monospace;font-weight:bold;opacity:0.85"><span style="color:#569cd6">AI_MODEL</span><span style="color:#d4d4d4">=</span><span style="color:#d4d4d4">deepseek/deepseek-chat-v3-0324</span></div>
<div class="t" style="left:0;top:1096.50px;font-size:22.75px;line-height:21.5px;font-family:'Liberation Mono',monospace;font-weight:bold;opacity:0.85"><span style="color:#569cd6">AI_TEMPERATURE</span><span style="color:#d4d4d4">=</span><span style="color:#d4d4d4">0.7</span></div>
<div class="t" style="left:0;top:1118.00px;font-size:22.75px;line-height:21.5px;font-family:'Liberation Mono',monospace;font-weight:bold;opacity:0.85"><span style="color:#569cd6">AI_MAX_TOKENS</span><span style="color:#d4d4d4">=</span><span style="color:#d4d4d4">2000</span></div>
<div class="t" style="left:0;top:1161.00px;font-size:22.75px;line-height:21.5px;font-family:'Liberation Mono',monospace;font-weight:bold;opacity:0.85"><span style="color:#6a9955"># Available TEE-secured models:</span></div>
<div class="t" style="left:0;top:1182.50px;font-size:22.75px;line-height:21.5px;font-family:'Liberation Mono',monospace;font-weight:bold;opacity:0.85"><span style="color:#6a9955"># - phala/qwen2.5-7b-instruct (recommended for code generation, fast)</span></div>
<div class="t" style="left:0;top:1204.00px;font-size:22.75px;line-height:21.5px;font-family:'Liberation Mono',monospace;font-weight:bold;opacity:0.85"><span style="color:#6a9955"># - deepseek/deepseek-chat-v3-0324 (strong reasoning, good for complex logic)</span></div>
<div class="t" style="left:0;top:1225.50px;font-size:22.75px;line-height:21.5px;font-family:'Liberation Mono',monospace;font-weight:bold;opacity:0.85"><span style="color:#6a9955"># - google/gemma-3-27b-it (most capable, slower)</span></div>
<div class="t" style="left:0;top:1247.00px;font-size:22.75px;line-height:21.5px;font-family:'Liberation Mono',monospace;font-weight:bold;opacity:0.85"><span style="color:#6a9955"># - phala/llama-3.3-70b (balanced performance)</span></div>
<div class="t" style="left:0;top:1268.50px;font-size:22.75px;line-height:21.5px;font-family:'Liberation Mono',monospace;font-weight:bold;opacity:0.85"><span style="color:#6a9955"># All models run in NVIDIA H100 TEE with cryptographic attestation</span></div>
<div class="t" style="left:0;top:1311.50px;font-size:22.75px;line-height:21.5px;font-family:'Liberation Mono',monospace;font-weight:bold;opacity:0.85"><span style="color:#6a9955"># TEE Sandbox (auto-configured by Phala CVM). For production you'll need to set the Sandbox URL to the your VibeVM sandbox</span></div>
<div class="t" style="left:0;top:1333.00px;font-size:22.75px;line-height:21.5px;font-family:'Liberation Mono',monospace;font-weight:bold;opacity:0.85"><span style="color:#6a9955"># SANDBOX_URL will be auto-populated</span></div>
<div class="t" style="left:0;top:1354.50px;font-size:22.75px;line-height:21.5px;font-family:'Liberation Mono',monospace;font-weight:bold;opacity:0.85"><span style="color:#6a9955"># SANDBOX_URL=http://sandbox:8080</span></div>
<div class="t" style="left:0;top:1397.50px;font-size:22.75px;line-height:21.5px;font-family:'Liberation Mono',monospace;font-weight:bold;opacity:0.85"><span style="color:#6a9955"># Production Deployment Notes:</span></div>
<div class="t" style="left:0;top:1419.00px;font-size:22.75px;line-height:21.5px;font-family:'Liberation Mono',monospace;font-weight:bold;opacity:0.85"><span style="color:#6a9955"># 1. Set GITHUB_REPO to your forked repository URL</span></div>
<div class="t" style="left:0;top:1440.50px;font-size:22.75px;line-height:21.5px;font-family:'Liberation Mono',monospace;font-weight:bold;opacity:0.85"><span style="color:#6a9955"># 2. Set GIT_COMMIT_HASH to your production-ready commit</span></div>
<div class="t" style="left:0;top:1462.00px;font-size:22.75px;line-height:21.5px;font-family:'Liberation Mono',monospace;font-weight:bold;opacity:0.85"><span style="color:#6a9955"># 3. Set AGENT_SALT to a unique, secure value</span></div>
<div class="t" style="left:0;top:1483.50px;font-size:22.75px;line-height:21.5px;font-family:'Liberation Mono',monospace;font-weight:bold;opacity:0.85"><span style="color:#6a9955"># 4. Ensure deployment.yml has correct build/deploy steps</span></div>
<div class="t" style="left:0;top:1505.00px;font-size:22.75px;line-height:21.5px;font-family:'Liberation Mono',monospace;font-weight:bold;opacity:0.85"><span style="color:#6a9955"># 5. Upload docker-compose.yml to Phala and configure CVM</span></div>
<div class="t" style="left:0;top:1526.50px;font-size:22.75px;line-height:21.5px;font-family:'Liberation Mono',monospace;font-weight:bold;opacity:0.85"><span style="color:#6a9955"># 6. Fund your agent wallet with Base Sepolia ETH (0.001 ETH minimum)</span></div>
</div></div>
<div class="a" style="left:3603.30px;top:392.20px;width:1.30px;height:969.00px;background:#292929;"></div>
<div class="a" style="left:3603.30px;top:392.20px;width:26.00px;height:1.30px;background:#292929;"></div>
<div class="a" style="left:3604.00px;top:553.70px;width:25.00px;height:3.50px;background:#a0a0a0;"></div>
<div class="a" style="left:659.00px;top:1361.20px;width:2970.00px;height:592.00px;background:#1e1e1e;"></div>
<div class="a" style="left:659.00px;top:1361.20px;width:2970.00px;height:1.60px;background:#414141;"></div>
<div class="t" style="left:696.40px;top:1382.46px;font-size:20.4px;line-height:24.48px;color:#9d9d9d;font-family:'Liberation Sans',sans-serif;font-weight:normal;letter-spacing:0.15px">PROBLEMS</div>
<div class="t" style="left:855.00px;top:1382.46px;font-size:20.4px;line-height:24.48px;color:#9d9d9d;font-family:'Liberation Sans',sans-serif;font-weight:normal;letter-spacing:0.15px">OUTPUT</div>
<div class="t" style="left:987.40px;top:1382.46px;font-size:20.4px;line-height:24.48px;color:#9d9d9d;font-family:'Liberation Sans',sans-serif;font-weight:normal;letter-spacing:0.15px">DEBUG CONSOLE</div>
<div class="t" style="left:1212.00px;top:1382.46px;font-size:20.4px;line-height:24.48px;color:#e7e7e7;font-family:'Liberation Sans',sans-serif;font-weight:normal;letter-spacing:0.15px">TERMINAL</div>
<div class="t" style="left:1363.00px;top:1382.46px;font-size:20.4px;line-height:24.48px;color:#9d9d9d;font-family:'Liberation Sans',sans-serif;font-weight:normal;letter-spacing:0.15px">PORTS</div>
<div class="a" style="left:1207.00px;top:1413.20px;width:114.50px;height:2.50px;background:#e7e7e7;"></div>
<div class="a" style="left:1440.00px;top:1379.70px;width:30px;height:30px;border-radius:50%;background:#2f7fd8;color:#fff;font-size:19px;line-height:30px;text-align:center;font-weight:bold">1</div>
<svg style="left:3375.00px;top:1381.20px;" width="26" height="26" viewBox="0 0 26 26"><path d="M13 1.5V24.5M1.5 13H24.5" stroke="#cccccc" stroke-width="2.2" stroke-linecap="round"/></svg>
<svg style="left:3410.00px;top:1388.20px;" width="20" height="12" viewBox="0 0 20 12"><path d="M2.5 2.5L10 9.5L17.5 2.5" fill="none" stroke="#cccccc" stroke-width="2.1" stroke-linecap="round" stroke-linejoin="round"/></svg>
<svg style="left:3450.00px;top:1391.20px;" width="26" height="8" viewBox="0 0 26 8"><circle cx="3.5" cy="4" r="2.3" fill="#cccccc"/><circle cx="13" cy="4" r="2.3" fill="#cccccc"/><circle cx="22.5" cy="4" r="2.3" fill="#cccccc"/></svg>
<div class="a" style="left:3498.50px;top:1379.20px;width:2.00px;height:30.00px;background:#5a5a5a;"></div>
<svg style="left:3523.00px;top:1382.20px;" width="26" height="26" viewBox="0 0 26 26"><path d="M2 9V2H9M17 2H24V9M24 17V24H17M9 24H2V17" fill="none" stroke="#cccccc" stroke-width="2.2"/></svg>
<svg style="left:3575.00px;top:1384.20px;" width="22" height="22" viewBox="0 0 22 22"><path d="M2.5 2.5L19.5 19.5M19.5 2.5L2.5 19.5" stroke="#cccccc" stroke-width="2.2" stroke-linecap="round"/></svg>
<div class="t m" style="left:696.50px;top:1448.20px;font-size:22.03px;line-height:26.5px;color:#cccccc;font-family:'Liberation Mono',monospace;-webkit-text-stroke:0.3px currentColor">gem@tdx:~/erc-8004-tee-agent$ python deployment/local_agent_server.py</div>
<div class="a" style="left:659.00px;top:1474.70px;width:2715.00px;height:2.50px;background:#141414;"></div>
<div class="t m" style="left:696.50px;top:1477.70px;font-size:22.03px;line-height:26.5px;color:#cccccc;font-family:'Liberation Mono',monospace;-webkit-text-stroke:0.3px currentColor"><span style="color:#23d18b">INFO</span>:     Uvicorn running on <b style="color:#e5e5e5">http://0.0.0.0:8000</b> (Press CTRL+C to quit)</div>
<div class="t m" style="left:696.50px;top:1504.20px;font-size:22.03px;line-height:26.5px;color:#cccccc;font-family:'Liberation Mono',monospace;-webkit-text-stroke:0.3px currentColor"><span style="color:#23d18b">INFO</span>:     10.4.0.1:39988 - <b style="color:#e5e5e5">"GET /api/wallet HTTP/1.1"</b> <span style="color:#23d18b">200 OK</span></div>
<div class="t m" style="left:696.50px;top:1530.70px;font-size:22.03px;line-height:26.5px;color:#cccccc;font-family:'Liberation Mono',monospace;-webkit-text-stroke:0.3px currentColor"><span style="color:#23d18b">INFO</span>:     10.4.0.1:39988 - <b style="color:#e5e5e5">"GET / HTTP/1.1"</b> <span style="color:#23d18b">200 OK</span></div>
<div class="t m" style="left:696.50px;top:1557.20px;font-size:22.03px;line-height:26.5px;color:#cccccc;font-family:'Liberation Mono',monospace;-webkit-text-stroke:0.3px currentColor"><span style="color:#23d18b">INFO</span>:     10.4.0.1:39988 - <b style="color:#e5e5e5">"GET /static/wallet-utils.js HTTP/1.1"</b> <span style="color:#23d18b">200 OK</span></div>
<div class="t m" style="left:696.50px;top:1583.70px;font-size:22.03px;line-height:26.5px;color:#cccccc;font-family:'Liberation Mono',monospace;-webkit-text-stroke:0.3px currentColor"><span style="color:#23d18b">INFO</span>:     10.4.0.1:40000 - <b style="color:#e5e5e5">"GET /static/trust-center.js HTTP/1.1"</b> <span style="color:#23d18b">200 OK</span></div>
<div class="t m" style="left:696.50px;top:1610.20px;font-size:22.03px;line-height:26.5px;color:#cccccc;font-family:'Liberation Mono',monospace;-webkit-text-stroke:0.3px currentColor"><span style="color:#23d18b">INFO</span>:     10.4.0.1:40000 - <b style="color:#e5e5e5">"GET /api/chain-config HTTP/1.1"</b> <span style="color:#23d18b">200 OK</span></div>
<div class="t m" style="left:696.50px;top:1636.70px;font-size:22.03px;line-height:26.5px;color:#cccccc;font-family:'Liberation Mono',monospace;-webkit-text-stroke:0.3px currentColor"><span style="color:#23d18b">INFO</span>:     10.4.0.1:39988 - <b style="color:#e5e5e5">"GET /api/trust-center-url HTTP/1.1"</b> <span style="color:#23d18b">200 OK</span></div>
<div class="t m" style="left:696.50px;top:1663.20px;font-size:22.03px;line-height:26.5px;color:#cccccc;font-family:'Liberation Mono',monospace;-webkit-text-stroke:0.3px currentColor"><span style="color:#23d18b">INFO</span>:     10.4.0.1:40012 - <b style="color:#e5e5e5">"GET /favicon.ico HTTP/1.1"</b> <span style="color:#f14c4c">404 Not Found</span></div>
<div class="t m" style="left:696.50px;top:1689.70px;font-size:22.03px;line-height:26.5px;color:#cccccc;font-family:'Liberation Mono',monospace;-webkit-text-stroke:0.3px currentColor"><span style="color:#23d18b">INFO</span>:     10.4.0.1:40012 - <b style="color:#e5e5e5">"GET /api/wallet HTTP/1.1"</b> <span style="color:#23d18b">200 OK</span></div>
<div class="t m" style="left:696.50px;top:1716.20px;font-size:22.03px;line-height:26.5px;color:#cccccc;font-family:'Liberation Mono',monospace;-webkit-text-stroke:0.3px currentColor"><span style="color:#23d18b">INFO</span>:     10.4.0.1:40012 - <b style="color:#e5e5e5">"GET /api/wallet HTTP/1.1"</b> <span style="color:#23d18b">200 OK</span></div>
<div class="t m" style="left:696.50px;top:1742.70px;font-size:22.03px;line-height:26.5px;color:#cccccc;font-family:'Liberation Mono',monospace;-webkit-text-stroke:0.3px currentColor"><span style="color:#23d18b">INFO</span>:     10.4.0.1:40012 - <b style="color:#e5e5e5">"GET /api/wallet HTTP/1.1"</b> <span style="color:#23d18b">200 OK</span></div>
<div class="t m" style="left:696.50px;top:1769.20px;font-size:22.03px;line-height:26.5px;color:#cccccc;font-family:'Liberation Mono',monospace;-webkit-text-stroke:0.3px currentColor"><span style="color:#23d18b">INFO</span>:     10.4.0.1:41208 - <b style="color:#e5e5e5">"GET /api/wallet HTTP/1.1"</b> <span style="color:#23d18b">200 OK</span></div>
<div class="t m" style="left:696.50px;top:1795.70px;font-size:22.03px;line-height:26.5px;color:#cccccc;font-family:'Liberation Mono',monospace;-webkit-text-stroke:0.3px currentColor"><span style="color:#23d18b">INFO</span>:     10.4.0.1:41208 - <b style="color:#e5e5e5">"GET /api/wallet HTTP/1.1"</b> <span style="color:#23d18b">200 OK</span></div>
<div class="t m" style="left:696.50px;top:1822.20px;font-size:22.03px;line-height:26.5px;color:#cccccc;font-family:'Liberation Mono',monospace;-webkit-text-stroke:0.3px currentColor"><span style="color:#23d18b">INFO</span>:     10.4.0.1:41208 - <b style="color:#e5e5e5">"GET /api/wallet HTTP/1.1"</b> <span style="color:#23d18b">200 OK</span></div>
<div class="t m" style="left:696.50px;top:1848.70px;font-size:22.03px;line-height:26.5px;color:#cccccc;font-family:'Liberation Mono',monospace;-webkit-text-stroke:0.3px currentColor"><span style="color:#23d18b">INFO</span>:     10.4.0.1:41208 - <b style="color:#e5e5e5">"GET /api/wallet HTTP/1.1"</b> <span style="color:#23d18b">200 OK</span></div>
<div class="t m" style="left:696.50px;top:1875.20px;font-size:22.03px;line-height:26.5px;color:#cccccc;font-family:'Liberation Mono',monospace;-webkit-text-stroke:0.3px currentColor"><span style="color:#23d18b">INFO</span>:     10.4.0.1:41208 - <b style="color:#e5e5e5">"GET /api/wallet HTTP/1.1"</b> <span style="color:#23d18b">200 OK</span></div>
<div class="t m" style="left:696.50px;top:1901.70px;font-size:22.03px;line-height:26.5px;color:#cccccc;font-family:'Liberation Mono',monospace;-webkit-text-stroke:0.3px currentColor"><span style="color:#23d18b">INFO</span>:     10.4.0.1:41208 - <b style="color:#e5e5e5">"GET /api/wallet HTTP/1.1"</b> <span style="color:#23d18b">200 OK</span></div>
<div class="a" style="left:696.70px;top:1927.20px;width:13.00px;height:26.00px;background:#c8c8c8;"></div>
<div class="a" style="left:3375.50px;top:1448.20px;width:1.50px;height:505.00px;background:#3a3a3a;"></div>
<div class="a" style="left:3376.50px;top:1450.20px;width:9.00px;height:16.50px;background:#2e8fc9;"></div>
<div class="a" style="left:3376.50px;top:1469.20px;width:9.00px;height:17.50px;background:#2e8fc9;"></div>
<div class="a" style="left:3394.00px;top:1452.20px;width:9.00px;height:11.00px;background:#e24b4b;"></div>
<div class="a" style="left:3376.50px;top:1690.70px;width:9.00px;height:12.50px;background:#2e8fc9;"></div>
<div class="a" style="left:3376.50px;top:1817.20px;width:9.00px;height:12.00px;background:#6b6b6b;"></div>
<div class="a" style="left:3377.00px;top:1914.70px;width:26.00px;height:38.50px;background:#3a3a3a;"></div>
<div class="a" style="left:3402.50px;top:1426.20px;width:1.60px;height:527.00px;background:#414141;"></div>
<div class="a" style="left:3404.00px;top:1427.20px;width:225.00px;height:41.00px;background:#37373d;"></div>
<svg style="left:3426.00px;top:1436.20px;" width="24" height="25" viewBox="0 0 24 25"><path d="M12 1.5L22 7V18L12 23.5L2 18V7Z" fill="none" stroke="#c5c5c5" stroke-width="1.6" stroke-linejoin="round"/><path d="M12 12.5L22 7V18L12 23.5Z" fill="#c5c5c5"/><text x="13.5" y="20" font-size="7" font-family="Liberation Mono" font-weight="bold" fill="#37373d">$</text></svg>
<div class="t" style="left:3461.50px;top:1434.12px;font-size:24.3px;line-height:29.16px;color:#e0e0e0;font-family:'Liberation Sans',sans-serif;font-weight:normal;">python</div>
<div class="t" style="left:3550.00px;top:1434.12px;font-size:24.3px;line-height:29.16px;color:#a9a9a9;font-family:'Liberation Sans',sans-serif;font-weight:normal;">erc...</div>
<svg style="left:3426.00px;top:1477.20px;" width="24" height="25" viewBox="0 0 24 25"><path d="M12 1.5L22 7V18L12 23.5L2 18V7Z" fill="none" stroke="#c5c5c5" stroke-width="1.6" stroke-linejoin="round"/><path d="M12 12.5L22 7V18L12 23.5Z" fill="#c5c5c5"/><text x="13.5" y="20" font-size="7" font-family="Liberation Mono" font-weight="bold" fill="#37373d">$</text></svg>
<div class="t" style="left:3461.50px;top:1475.12px;font-size:24.3px;line-height:29.16px;color:#e0e0e0;font-family:'Liberation Sans',sans-serif;font-weight:normal;">bash</div>
<div class="a" style="left:0.00px;top:1953.20px;width:3630.00px;height:41.00px;background:#2b7bd3;"></div>
<div class="a" style="left:0.00px;top:1953.20px;width:64.70px;height:41.00px;background:#1f8a5a;"></div>
<svg style="left:22.00px;top:1961.20px;" width="22" height="26" viewBox="0 0 22 26"><path d="M3 21.5L9.5 15L3 8.5M19 3L12.5 9.5L19 16" fill="none" stroke="#ffffff" stroke-width="2.1" stroke-linecap="round" stroke-linejoin="round"/></svg>
<svg style="left:82.00px;top:1961.20px;" width="24" height="28" viewBox="0 0 24 28"><path d="M4 4Q4 2 6 2H20Q22 2 22 4V22H6Q4 22 4 24V4ZM4 24Q4 26 6 26H22V22" fill="none" stroke="#fff" stroke-width="2"/><path d="M8 6V8M8 11V13M8 16V18" stroke="#fff" stroke-width="1.6"/><path d="M8 24V28L10 26.5L12 28V24" fill="#fff"/></svg>
<div class="t" style="left:113.00px;top:1959.30px;font-size:24px;line-height:28.8px;color:#ffffff;font-family:'Liberation Sans',sans-serif;font-weight:normal;letter-spacing:0.65px">erc-8004-tee-agent</div>
<svg style="left:342.00px;top:1959.20px;" width="26" height="30" viewBox="0 0 26 30"><circle cx="6" cy="5" r="3.3" fill="none" stroke="#fff" stroke-width="2"/><circle cx="6" cy="25" r="3.3" fill="none" stroke="#fff" stroke-width="2"/><circle cx="20" cy="10" r="3.3" fill="none" stroke="#fff" stroke-width="2"/><path d="M6 8.3V21.7M20 13.3Q20 18 12 18Q6 18 6 21" fill="none" stroke="#fff" stroke-width="2"/></svg>
<div class="t" style="left:375.00px;top:1959.30px;font-size:24px;line-height:28.8px;color:#ffffff;font-family:'Liberation Sans',sans-serif;font-weight:normal;letter-spacing:0.45px">feat/trust-center</div>
<svg style="left:562.00px;top:1960.20px;" width="28" height="28" viewBox="0 0 28 28"><path d="M4.5 11.5A10 10 0 0 1 22 8M23.5 16.5A10 10 0 0 1 6 20" fill="none" stroke="#fff" stroke-width="2.1" stroke-linecap="round"/><path d="M22.5 2.5V8.5H16.5M5.5 25.5V19.5H11.5" fill="none" stroke="#fff" stroke-width="2.1" stroke-linecap="round" stroke-linejoin="round"/></svg>
<svg style="left:621.00px;top:1962.20px;" width="24" height="24" viewBox="0 0 24 24"><circle cx="12" cy="12" r="10.5" fill="none" stroke="#fff" stroke-width="2"/><path d="M8 8L16 16M16 8L8 16" stroke="#fff" stroke-width="2" stroke-linecap="round"/></svg>
<div class="t" style="left:653.50px;top:1959.30px;font-size:24px;line-height:28.8px;color:#ffffff;font-family:'Liberation Sans',sans-serif;font-weight:normal;">0</div>
<svg style="left:675.00px;top:1961.20px;" width="24" height="24" viewBox="0 0 24 24"><path d="M12 2L22.5 22H1.5Z" fill="none" stroke="#fff" stroke-width="2" stroke-linejoin="round"/><path d="M12 9V15.5" stroke="#fff" stroke-width="2"/><circle cx="12" cy="18.5" r="1.2" fill="#fff"/></svg>
<div class="t" style="left:707.00px;top:1959.30px;font-size:24px;line-height:28.8px;color:#ffffff;font-family:'Liberation Sans',sans-serif;font-weight:normal;">0</div>
<svg style="left:753.00px;top:1961.20px;" width="24" height="26" viewBox="0 0 24 26"><path d="M7 3Q2 8 7 13M17 3Q22 8 17 13M9.5 5.5Q7.5 8 9.5 10.5M14.5 5.5Q16.5 8 14.5 10.5" fill="none" stroke="#fff" stroke-width="1.8" stroke-linecap="round"/><circle cx="12" cy="8" r="1.6" fill="#fff"/><path d="M12 10L7 24M12 10L17 24M9 18H15" fill="none" stroke="#fff" stroke-width="1.8" stroke-linecap="round"/></svg>
<div class="t" style="left:785.50px;top:1959.30px;font-size:24px;line-height:28.8px;color:#ffffff;font-family:'Liberation Sans',sans-serif;font-weight:normal;">1</div>
<div class="t" style="left:2770.50px;top:1959.30px;font-size:24px;line-height:28.8px;color:#ffffff;font-family:'Liberation Sans',sans-serif;font-weight:normal;letter-spacing:0.1px">Ln 18, Col 93</div>
<div class="t" style="left:2946.00px;top:1959.30px;font-size:24px;line-height:28.8px;color:#ffffff;font-family:'Liberation Sans',sans-serif;font-weight:normal;letter-spacing:0.1px">Spaces: 4</div>
<div class="t" style="left:3082.00px;top:1959.30px;font-size:24px;line-height:28.8px;color:#ffffff;font-family:'Liberation Sans',sans-serif;font-weight:normal;letter-spacing:0.1px">UTF-8</div>
<div class="t" style="left:3180.00px;top:1959.30px;font-size:24px;line-height:28.8px;color:#ffffff;font-family:'Liberation Sans',sans-serif;font-weight:normal;letter-spacing:0.1px">LF</div>
<div class="t" style="left:3275.00px;top:1959.30px;font-size:24px;line-height:28.8px;color:#ffffff;font-family:'Liberation Sans',sans-serif;font-weight:normal;letter-spacing:0.1px">Properties</div>
<div class="t" style="left:3414.60px;top:1959.30px;font-size:24px;line-height:28.8px;color:#ffffff;font-family:'Liberation Sans',sans-serif;font-weight:normal;letter-spacing:0.1px">Layout: U.S.</div>
<div class="t" style="left:3238.00px;top:1959.50px;font-size:22px;line-height:26.4px;color:#ffffff;font-family:'Liberation Sans',sans-serif;font-weight:normal;letter-spacing:-1px">{ }</div>
<svg style="left:3574.00px;top:1959.20px;" width="30" height="30" viewBox="0 0 30 30"><path d="M12 4Q5 5 5 12V19L3 22H21L19 19V12Q19 9 17 7" fill="none" stroke="#fff" stroke-width="2" stroke-linejoin="round"/><path d="M9.5 24.5Q12 27.5 14.5 24.5" fill="none" stroke="#fff" stroke-width="2"/><circle cx="20" cy="5.5" r="4.3" fill="#fff"/></svg>
<div class="a" style="left:1627.00px;top:281.20px;width:478.00px;height:45.00px;background:#252526;border:1.6px solid #454545;border-radius:6px;box-shadow:0 2px 8px rgba(0,0,0,0.36)"></div>
<svg style="left:1854.00px;top:273.20px;" width="22" height="10" viewBox="0 0 22 10"><path d="M0 9.5L11 0.5L22 9.5" fill="#252526" stroke="#454545" stroke-width="1.6"/></svg>
<div class="t" style="left:1643.00px;top:289.72px;font-size:23.3px;line-height:27.96px;color:#cccccc;font-family:'Liberation Sans',sans-serif;font-weight:normal;">Search gem — .env — gem — code-server</div>
<div class="wb"></div>
</div>
</body></html>
